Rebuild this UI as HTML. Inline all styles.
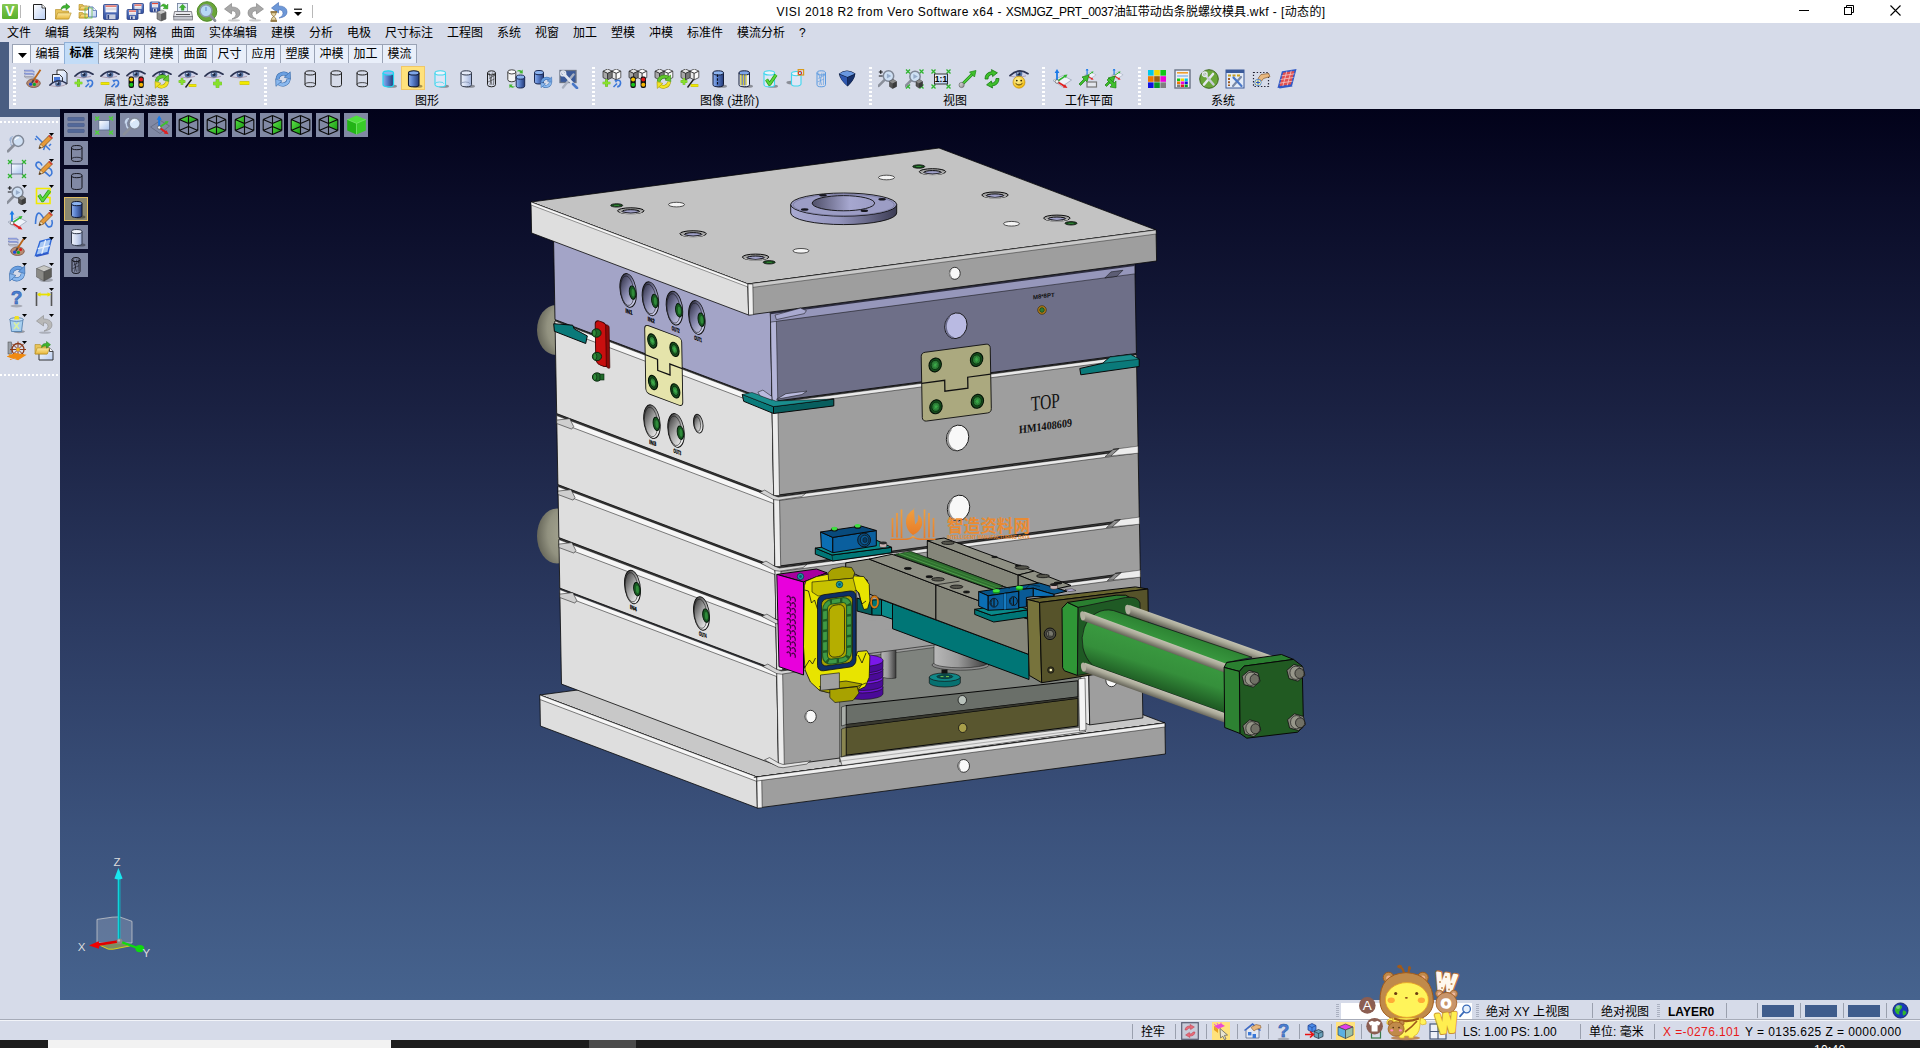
<!DOCTYPE html>
<html lang="zh-CN">
<head>
<meta charset="utf-8">
<title>VISI 2018 R2</title>
<style>
html,body{margin:0;padding:0;}
body{width:1920px;height:1048px;overflow:hidden;position:relative;background:#d6dbe9;
 font-family:"Liberation Sans","Noto Sans CJK SC",sans-serif;font-size:12px;color:#000;}
.abs{position:absolute;}
#titlebar{left:0;top:0;width:1920px;height:23px;background:#fff;}
#title{left:776.5px;top:5px;white-space:nowrap;font-size:12px;line-height:15px;color:#000;}
#menubar{left:0;top:23px;width:1920px;height:19px;background:#d6dbe9;}
.mi{position:absolute;top:3px;line-height:15px;white-space:nowrap;}
#lstrip{left:0;top:42px;width:9px;height:75px;background:#495d81;}
#lstrip2{left:0;top:109px;width:60px;height:8px;background:#495d81;}
#tabs{left:12px;top:44px;height:20px;}
.tab{position:absolute;top:44px;height:19px;background:#e9effa;border:1px solid #9aa3b5;border-bottom:none;box-sizing:border-box;
 text-align:center;line-height:18px;white-space:nowrap;}
.tab.sel{top:42px;height:22px;background:#c2dcf7;border-color:#8fb0d8;font-weight:bold;line-height:20px;}
#toolbar{left:9px;top:64px;width:1911px;height:45px;background:#d6dbe9;}
.grip{position:absolute;width:3px;background-image:repeating-linear-gradient(#fff 0 2px,transparent 2px 4px);}
.tlabel{position:absolute;top:94px;line-height:15px;white-space:nowrap;}
#viewport{left:60px;top:109px;width:1860px;height:891px;
 background:linear-gradient(#02021a 0px,#0a0c28 90px,#1a2142 300px,#2c3b62 520px,#3b527c 720px,#46638e 891px);}
#leftpanel{left:0;top:117px;width:60px;height:883px;background:#d6dbe9;}
#status1{left:0;top:1000px;width:1920px;height:20px;background:#d6dbe9;}
#status2{left:0;top:1020px;width:1920px;height:20px;background:#d6dbe9;}
#taskbar{left:0;top:1040px;width:1920px;height:8px;background:#1d1d1d;}
.st{position:absolute;white-space:nowrap;line-height:15px;font-size:12px;}
.vsep{position:absolute;width:1px;background:#9aa0ae;}
.vb{position:absolute;width:24px;height:24px;background:#8189a4;box-sizing:border-box;}
</style>
</head>
<body>
<svg width="0" height="0" style="position:absolute"><defs>
<linearGradient id="gcb" x1="0" x2="1"><stop offset="0" stop-color="#8fb0ea"/><stop offset="0.35" stop-color="#5f86d2"/><stop offset="1" stop-color="#243a78"/></linearGradient>
<linearGradient id="gcl" x1="0" x2="1"><stop offset="0" stop-color="#eef2fb"/><stop offset="0.5" stop-color="#cdd8f0"/><stop offset="1" stop-color="#9fb0d8"/></linearGradient>
<linearGradient id="gfl" x1="0" y1="0" x2="0" y2="1"><stop offset="0" stop-color="#6d8fd8"/><stop offset="1" stop-color="#2f4b9a"/></linearGradient>
<linearGradient id="gfo" x1="0" y1="0" x2="0" y2="1"><stop offset="0" stop-color="#fbe9a4"/><stop offset="1" stop-color="#e8b73a"/></linearGradient>
<linearGradient id="gpg" x1="0" y1="0" x2="1" y2="1"><stop offset="0" stop-color="#ffffff"/><stop offset="1" stop-color="#b8cdf2"/></linearGradient>
<linearGradient id="ggr" x1="0" y1="0" x2="1" y2="1"><stop offset="0" stop-color="#e4e4e4"/><stop offset="1" stop-color="#8c8c8c"/></linearGradient>
<radialGradient id="gsm" cx="0.4" cy="0.35" r="0.7"><stop offset="0" stop-color="#fff7a0"/><stop offset="1" stop-color="#f0b400"/></radialGradient>
<linearGradient id="gvw" x1="0" y1="0" x2="1" y2="1"><stop offset="0" stop-color="#ffffff"/><stop offset="1" stop-color="#a9c4ee"/></linearGradient>
<linearGradient id="ggn" x1="0" y1="0" x2="1" y2="1"><stop offset="0" stop-color="#5ee04a"/><stop offset="1" stop-color="#169a10"/></linearGradient>
</defs></svg>

<!-- ===== title bar ===== -->
<div id="titlebar" class="abs"></div>
<div id="title" class="abs"><span style="letter-spacing:0.487px">VISI 2018 R2 from Vero Software x64 - </span><span style="letter-spacing:-0.307px">XSMJGZ_PRT_0037</span><span style="letter-spacing:0.04px">油缸带动齿条脱螺纹模具</span><span style="letter-spacing:0.4px">.wkf - [</span><span style="letter-spacing:0.36px">动态的</span>]</div>
<div class="abs" style="left:2px;top:4px;width:16px;height:15px;background:linear-gradient(#86c953,#58b02c);border-radius:1px"></div><div class="abs" style="left:2px;top:3px;width:16px;height:16px;color:#fff;font-weight:bold;font-size:14px;line-height:16px;text-align:center">V</div><div class="vsep" style="left:20px;top:5px;height:13px;background:#b8b8b8"></div><svg class="abs" style="left:29px;top:2px" width="20" height="20" viewBox="0 0 20 20" ><path d="M4.5 2.5h8.5l3.5 3.5v11.5h-12z" fill="url(#gpg)" stroke="#222" stroke-width="1"/><path d="M13.0 2.5v3.5h3.5" fill="#fff" stroke="#222" stroke-width="0.8"/></svg>
<svg class="abs" style="left:54px;top:2px" width="20" height="20" viewBox="0 0 20 20" ><path d="M1.5 7.5h5.6000000000000005l1.2 1.5h6.2v8h-13z" fill="#e8c45a" stroke="#b08a22" stroke-width="0.6"/><path d="M1.5 17l2.2 -6.050000000000001h13.5l-2.4 6.050000000000001z" fill="url(#gfo)" stroke="#b08a22" stroke-width="0.6"/><path d="M7 7.5Q7.5 3.0 12 3.5V1.5L16 4.7L12 8.1V5.9Q9 5.5 7 7.5Z" fill="#3fb52f" stroke="#1f7a16" stroke-width="0.5"/></svg>
<svg class="abs" style="left:78px;top:2px" width="20" height="20" viewBox="0 0 20 20" ><path d="M1 2.5h3.6l1.2 1.5h3.1999999999999993v4h-8z" fill="#e8c45a" stroke="#b08a22" stroke-width="0.6"/><path d="M1 8l2.2 -3.8500000000000005h8.5l-2.4 3.8500000000000005z" fill="url(#gfo)" stroke="#b08a22" stroke-width="0.6"/><path d="M1 10.5h3.6l1.2 1.5h3.1999999999999993v4h-8z" fill="#e8c45a" stroke="#b08a22" stroke-width="0.6"/><path d="M1 16l2.2 -3.8500000000000005h8.5l-2.4 3.8500000000000005z" fill="url(#gfo)" stroke="#b08a22" stroke-width="0.6"/><path d="M10.5 5h4.5l3.5 3.5v6.5h-8z" fill="url(#gpg)" stroke="#5a78b8" stroke-width="1"/><path d="M15.0 5v3.5h3.5" fill="#fff" stroke="#5a78b8" stroke-width="0.8"/><rect x="7" y="6" width="7" height="10" fill="none" stroke="#58b838" stroke-width="0.7"/></svg>
<svg class="abs" style="left:101px;top:2px" width="20" height="20" viewBox="0 0 20 20" ><rect x="2.5" y="2.5" width="15" height="15" rx="1" fill="url(#gfl)" stroke="#2a3f80" stroke-width="0.8"/><rect x="4.5" y="3.1" width="11" height="7.199999999999999" fill="#f4f4f8"/><path d="M4.5 4.1h11" stroke="#e04a3a" stroke-width="1.2"/><path d="M5.0 6.3h10M5.0 7.7h10" stroke="#b8b8c8" stroke-width="0.5"/><rect x="5.5" y="12.4" width="9" height="4.7" fill="#c8cedf"/><rect x="6.5" y="13.0" width="1.6" height="3.9000000000000004" fill="#2a3f80"/></svg>
<svg class="abs" style="left:125px;top:2px" width="20" height="20" viewBox="0 0 20 20" ><rect x="7.5" y="1.5" width="11" height="10" rx="1" fill="url(#gfl)" stroke="#2a3f80" stroke-width="0.8"/><rect x="9.5" y="2.1" width="7" height="4.8" fill="#f4f4f8"/><path d="M9.5 3.1h7" stroke="#e04a3a" stroke-width="1.2"/><path d="M10.0 5.3h6M10.0 6.7h6" stroke="#b8b8c8" stroke-width="0.5"/><rect x="10.5" y="8.100000000000001" width="5" height="3.0000000000000004" fill="#c8cedf"/><rect x="11.5" y="8.5" width="1.6" height="2.6" fill="#2a3f80"/><rect x="2" y="7.5" width="11" height="10" rx="1" fill="url(#gfl)" stroke="#2a3f80" stroke-width="0.8"/><rect x="4" y="8.1" width="7" height="4.8" fill="#f4f4f8"/><path d="M4 9.1h7" stroke="#e04a3a" stroke-width="1.2"/><path d="M4.5 11.3h6M4.5 12.7h6" stroke="#b8b8c8" stroke-width="0.5"/><rect x="5" y="14.100000000000001" width="5" height="3.0000000000000004" fill="#c8cedf"/><rect x="6" y="14.5" width="1.6" height="2.6" fill="#2a3f80"/></svg>
<svg class="abs" style="left:149px;top:0px" width="22" height="22" viewBox="0 0 22 22" ><rect x="1" y="2" width="10" height="10" rx="1" fill="url(#gfl)" stroke="#2a3f80" stroke-width="0.8"/><rect x="3" y="2.6" width="6" height="4.8" fill="#f4f4f8"/><path d="M3 3.6h6" stroke="#e04a3a" stroke-width="1.2"/><path d="M3.5 5.8h5M3.5 7.2h5" stroke="#b8b8c8" stroke-width="0.5"/><rect x="4" y="8.600000000000001" width="4" height="3.0000000000000004" fill="#c8cedf"/><rect x="5" y="9.0" width="1.6" height="2.6" fill="#2a3f80"/><path d="M8 12L12.95 10L17 12V19L12.05 21L8 19Z" fill="#8a8a8a" stroke="#333" stroke-width="0.5"/><path d="M8 12L12.05 14L17 12L12.95 10Z" fill="#c8c8c8"/><path d="M12.05 14V21L17 19V12Z" fill="#5a5a5a"/><path d="M11.5 6.5Q14 2 17.5 5.5L19 4L18.8 9L14 8.6L15.6 7.2Q14 5.4 11.5 6.5Z" fill="#3fb52f" stroke="#1f7a16" stroke-width="0.4"/></svg>
<svg class="abs" style="left:173px;top:2px" width="21" height="20" viewBox="0 0 21 20" ><rect x="4.5" y="1.5" width="10" height="8" fill="#e6f0fb" stroke="#6a7a98" stroke-width="0.8"/><path d="M9.6 2.2L12.8 5.6H10.899999999999999V8.2H8.299999999999999V5.6H6.3999999999999995Z" fill="#3fb52f" stroke="#1f7a16" stroke-width="0.4"/><path d="M1.5 9.5h17l1 5.5h-19z" fill="#e9e9ee" stroke="#6a6a72" stroke-width="0.8"/><rect x="0.8" y="14.5" width="18.6" height="3.5" fill="#c4c6ce" stroke="#6a6a72" stroke-width="0.7"/><path d="M3 12.5h14" stroke="#555" stroke-width="1"/></svg>
<svg class="abs" style="left:196px;top:1px" width="22" height="22" viewBox="0 0 22 22" ><circle cx="11" cy="10.5" r="9.8" fill="#6aa63a"/><circle cx="11" cy="10.5" r="9.8" fill="none" stroke="#4f8a26" stroke-width="1"/><path d="M14.2 14.2L19 19.6" stroke="#8a8f9a" stroke-width="2.8" stroke-linecap="round"/><circle cx="10" cy="9.8" r="6" fill="#b8d8f4" stroke="#8a98a8" stroke-width="1.6"/><path d="M10 6v4" stroke="#5a88c8" stroke-width="1"/></svg>
<svg class="abs" style="left:223px;top:2px" width="20" height="20" viewBox="0 0 20 20" ><g transform="translate(1,0.5)"><path d="M7.5 1L0.5 6.5L7.5 11.5V8.4Q12 8 12 12Q12 15 8 16.5Q16 15.5 16 10.5Q16 4.6 7.5 4.4Z" fill="#a8a8a8" stroke="#7a7a7a" stroke-width="0.6"/></g><ellipse cx="11" cy="18.4" rx="6" ry="1.1" fill="#000" opacity="0.2"/></svg>
<svg class="abs" style="left:246px;top:2px" width="20" height="20" viewBox="0 0 20 20" ><g transform="translate(18,0.5) scale(-1,1)"><path d="M7.5 1L0.5 6.5L7.5 11.5V8.4Q12 8 12 12Q12 15 8 16.5Q16 15.5 16 10.5Q16 4.6 7.5 4.4Z" fill="#a8a8a8" stroke="#7a7a7a" stroke-width="0.6"/></g><ellipse cx="9" cy="18.4" rx="6" ry="1.1" fill="#000" opacity="0.2"/></svg>
<svg class="abs" style="left:268px;top:1px" width="22" height="22" viewBox="0 0 22 22" ><g transform="translate(3,0.5)"><path d="M7.5 1L0.5 6.5L7.5 11.5V8.4Q12 8 12 12Q12 15 8 16.5Q16 15.5 16 10.5Q16 4.6 7.5 4.4Z" fill="#6d98d8" stroke="#3f68b0" stroke-width="0.6"/></g><path d="M2.5 11h6.5M2.5 20h6.5" stroke="#7a5a1a" stroke-width="1.4"/><path d="M3.2 11.8Q3.4 14.6 5.7 15.5Q8 14.6 8.2 11.8ZM3.2 19.2Q3.4 16.4 5.7 15.5Q8 16.4 8.2 19.2Z" fill="#e8d8a8" stroke="#7a5a1a" stroke-width="0.6"/></svg>
<svg class="abs" style="left:293px;top:8px" width="10" height="10" viewBox="0 0 10 10" ><path d="M1 1.2h8" stroke="#000" stroke-width="1.2"/><path d="M1 4h8l-4 4z" fill="#000"/></svg>
<div class="vsep" style="left:312px;top:5px;height:13px;background:#b8b8b8"></div><svg class="abs" style="left:1799px;top:5px" width="10" height="12" viewBox="0 0 10 12" ><path d="M0 5.5h10" stroke="#000" stroke-width="1"/></svg>
<svg class="abs" style="left:1844px;top:5px" width="11" height="11" viewBox="0 0 11 11" ><rect x="0.5" y="2.5" width="7" height="7" fill="#fff" stroke="#000" stroke-width="1"/><path d="M2.5 2.5v-2h7v7h-2" fill="none" stroke="#000" stroke-width="1"/></svg>
<svg class="abs" style="left:1890px;top:5px" width="11" height="11" viewBox="0 0 11 11" ><path d="M0.5 0.5l10 10M10.5 0.5l-10 10" stroke="#000" stroke-width="1.1"/></svg>
<svg class="abs" style="left:1870px;top:29px" width="10" height="10" viewBox="0 0 10 10" ><path d="M0 8.5h9" stroke="#8a8a8a" stroke-width="1"/></svg>
<svg class="abs" style="left:1888px;top:28px" width="10" height="10" viewBox="0 0 10 10" ><rect x="0.5" y="2.5" width="6" height="6" fill="none" stroke="#8a8a8a" stroke-width="1"/><path d="M2.5 2.5v-2h6v6h-2" fill="none" stroke="#8a8a8a" stroke-width="1"/></svg>
<svg class="abs" style="left:1906px;top:28px" width="10" height="10" viewBox="0 0 10 10" ><path d="M0.5 0.5l9 9M9.5 0.5l-9 9" stroke="#8a8a8a" stroke-width="1"/></svg>

<!-- ===== menu bar ===== -->
<div id="menubar" class="abs">
<span class="mi" style="left:7px">文件</span><span class="mi" style="left:45px">编辑</span><span class="mi" style="left:83px">线架构</span><span class="mi" style="left:133px">网格</span><span class="mi" style="left:171px">曲面</span><span class="mi" style="left:209px">实体编辑</span><span class="mi" style="left:271px">建模</span><span class="mi" style="left:309px">分析</span><span class="mi" style="left:347px">电极</span><span class="mi" style="left:385px">尺寸标注</span><span class="mi" style="left:447px">工程图</span><span class="mi" style="left:497px">系统</span><span class="mi" style="left:535px">视窗</span><span class="mi" style="left:573px">加工</span><span class="mi" style="left:611px">塑模</span><span class="mi" style="left:649px">冲模</span><span class="mi" style="left:687px">标准件</span><span class="mi" style="left:737px">模流分析</span><span class="mi" style="left:799px">?</span>
</div>
<div id="lstrip" class="abs"></div>
<!-- ===== tabs ===== -->
<div class="tab" style="left:12px;width:19px;background:#fff"><svg width="9" height="5" style="position:absolute;left:5px;top:8px"><path d="M0 0H9L4.5 5Z" fill="#000"/></svg></div>
<div class="tab" style="left:30px;width:35px">编辑</div>
<div class="tab sel" style="left:64px;width:35px">标准</div>
<div class="tab" style="left:98px;width:47px">线架构</div>
<div class="tab" style="left:144px;width:35px">建模</div>
<div class="tab" style="left:178px;width:35px">曲面</div>
<div class="tab" style="left:212px;width:35px">尺寸</div>
<div class="tab" style="left:246px;width:35px">应用</div>
<div class="tab" style="left:280px;width:35px">塑膜</div>
<div class="tab" style="left:314px;width:35px">冲模</div>
<div class="tab" style="left:348px;width:35px">加工</div>
<div class="tab" style="left:382px;width:35px">模流</div>
<!-- ===== toolbar ===== -->
<div id="toolbar" class="abs"></div>
<div class="grip" style="left:13px;top:67px;height:40px"></div>
<div class="grip" style="left:264px;top:67px;height:40px"></div>
<div class="grip" style="left:592px;top:67px;height:40px"></div>
<div class="grip" style="left:869px;top:67px;height:40px"></div>
<div class="grip" style="left:1042px;top:67px;height:40px"></div>
<div class="grip" style="left:1138px;top:67px;height:40px"></div>
<div class="tlabel" style="left:104px;letter-spacing:0.35px">属性/过滤器</div>
<div class="tlabel" style="left:415px">图形</div>
<div class="tlabel" style="left:700px">图像 (进阶)</div>
<div class="tlabel" style="left:943px">视图</div>
<div class="tlabel" style="left:1065px">工作平面</div>
<div class="tlabel" style="left:1211px">系统</div>
<svg class="abs" style="left:23px;top:69px" width="20" height="20" viewBox="0 0 20 20" ><path d="M1 1.2h8.5l2 1.6h-8.5z" fill="#8fa4ee" stroke="#5060a8" stroke-width="0.4"/><path d="M1 2.6h8.5l2 1.6h-8.5z" fill="#eef0f8" stroke="#8088a8" stroke-width="0.4"/><path d="M1 4.2h8.5l2 1.6h-8.5z" fill="#8fa4ee" stroke="#5060a8" stroke-width="0.4"/><path d="M1 5.8h8.5l2 1.6h-8.5z" fill="#eef0f8" stroke="#8088a8" stroke-width="0.4"/><path d="M1 7.4h8.5l2 1.6h-8.5z" fill="#c8c8d0" stroke="#707080" stroke-width="0.4"/><ellipse cx="10.5" cy="14.2" rx="6.8" ry="4.3" fill="#b98a72" stroke="#6a4632" stroke-width="0.7"/><circle cx="7.6" cy="15.2" r="1.6" fill="#1a4ad8"/><circle cx="11.4" cy="15.4" r="1.6" fill="#12a82a"/><circle cx="13.6" cy="12.6" r="1.5" fill="#d81a1a"/><path d="M17.5 0.8L10 12" stroke="#b8641a" stroke-width="1.8"/><path d="M10.6 11L8.8 14" stroke="#444" stroke-width="1.6"/></svg>
<svg class="abs" style="left:49px;top:69px" width="20" height="20" viewBox="0 0 20 20" ><path d="M8 1h7l3 3v11h-10z" fill="url(#gpg)" stroke="#222" stroke-width="0.9"/><path d="M3.5 5.5h7l3 3v8h-10z" fill="url(#gpg)" stroke="#222" stroke-width="0.9"/><rect x="5" y="8" width="6" height="5" fill="#4a78d8"/><g transform="translate(0,9.5) scale(0.92)"><path d="M1 7.2Q9.5 -0.5 19 5.2Q16 9.2 9.5 9.2Q4 9.2 1 7.2Z" fill="#cfd3ea"/><circle cx="10" cy="5.6" r="3.3" fill="#56719f"/><circle cx="10" cy="5.6" r="1.5" fill="#1c2642"/><circle cx="8.9" cy="4.5" r="0.8" fill="#e8eefc"/><path d="M1 7.2Q9.5 -1.2 19 5.2" fill="none" stroke="#2c3452" stroke-width="1.7" stroke-linecap="round"/><path d="M1.5 7.8Q9 10.2 17 7.4" fill="none" stroke="#a08a98" stroke-width="0.7"/></g></svg>
<svg class="abs" style="left:74px;top:69px" width="20" height="20" viewBox="0 0 20 20" ><g transform="translate(0,0) scale(1.0)"><path d="M1 7.2Q9.5 -0.5 19 5.2Q16 9.2 9.5 9.2Q4 9.2 1 7.2Z" fill="#cfd3ea"/><circle cx="10" cy="5.6" r="3.3" fill="#56719f"/><circle cx="10" cy="5.6" r="1.5" fill="#1c2642"/><circle cx="8.9" cy="4.5" r="0.8" fill="#e8eefc"/><path d="M1 7.2Q9.5 -1.2 19 5.2" fill="none" stroke="#2c3452" stroke-width="1.7" stroke-linecap="round"/><path d="M1.5 7.8Q9 10.2 17 7.4" fill="none" stroke="#a08a98" stroke-width="0.7"/></g><path d="M0.75 14H8.25M4.5 10.25V17.75" stroke="#5aa512" stroke-width="2.5999999999999996" /><path d="M0.75 14H8.25M4.5 10.25V17.75" stroke="#86e02c" stroke-width="1.9"/><g transform="translate(11,10.5)"><path d="M0.5 7.5L4 4" stroke="#3c78d8" stroke-width="1.6" fill="none"/><path d="M3 1.2Q7.5 -0.2 7.6 3.4Q7.4 6.8 4.2 7.4" stroke="#3c78d8" stroke-width="1.6" fill="none"/><path d="M1.2 0.2L4.6 0.6L3 3.4Z" fill="#3c78d8"/></g></svg>
<svg class="abs" style="left:100px;top:69px" width="20" height="20" viewBox="0 0 20 20" ><g transform="translate(0,0) scale(1.0)"><path d="M1 7.2Q9.5 -0.5 19 5.2Q16 9.2 9.5 9.2Q4 9.2 1 7.2Z" fill="#cfd3ea"/><circle cx="10" cy="5.6" r="3.3" fill="#56719f"/><circle cx="10" cy="5.6" r="1.5" fill="#1c2642"/><circle cx="8.9" cy="4.5" r="0.8" fill="#e8eefc"/><path d="M1 7.2Q9.5 -1.2 19 5.2" fill="none" stroke="#2c3452" stroke-width="1.7" stroke-linecap="round"/><path d="M1.5 7.8Q9 10.2 17 7.4" fill="none" stroke="#a08a98" stroke-width="0.7"/></g><path d="M0.75 14.5H9.25" stroke="#b8b000" stroke-width="2.7"/><path d="M0.75 14.5H9.25" stroke="#f2ea00" stroke-width="1.9"/><g transform="translate(11,10.5)"><path d="M0.5 7.5L4 4" stroke="#3c78d8" stroke-width="1.6" fill="none"/><path d="M3 1.2Q7.5 -0.2 7.6 3.4Q7.4 6.8 4.2 7.4" stroke="#3c78d8" stroke-width="1.6" fill="none"/><path d="M1.2 0.2L4.6 0.6L3 3.4Z" fill="#3c78d8"/></g></svg>
<svg class="abs" style="left:126px;top:69px" width="20" height="20" viewBox="0 0 20 20" ><g transform="translate(0,-0.5) scale(1.0)"><path d="M1 7.2Q9.5 -0.5 19 5.2Q16 9.2 9.5 9.2Q4 9.2 1 7.2Z" fill="#cfd3ea"/><circle cx="10" cy="5.6" r="3.3" fill="#56719f"/><circle cx="10" cy="5.6" r="1.5" fill="#1c2642"/><circle cx="8.9" cy="4.5" r="0.8" fill="#e8eefc"/><path d="M1 7.2Q9.5 -1.2 19 5.2" fill="none" stroke="#2c3452" stroke-width="1.7" stroke-linecap="round"/><path d="M1.5 7.8Q9 10.2 17 7.4" fill="none" stroke="#a08a98" stroke-width="0.7"/></g><rect x="2.6" y="7.5" width="5.4" height="11.5" rx="2" fill="#111"/><circle cx="5.300000000000001" cy="10.6" r="2" fill="#f5c400"/><circle cx="5.300000000000001" cy="15.8" r="2" fill="#18c418"/><rect x="12.4" y="7.5" width="5.4" height="11.5" rx="2" fill="#111"/><circle cx="15.100000000000001" cy="10.6" r="2" fill="#e01818"/><circle cx="15.100000000000001" cy="15.8" r="2" fill="#f5b400"/></svg>
<svg class="abs" style="left:152px;top:69px" width="20" height="20" viewBox="0 0 20 20" ><g transform="translate(0,0) scale(1.0)"><path d="M1 7.2Q9.5 -0.5 19 5.2Q16 9.2 9.5 9.2Q4 9.2 1 7.2Z" fill="#cfd3ea"/><circle cx="10" cy="5.6" r="3.3" fill="#56719f"/><circle cx="10" cy="5.6" r="1.5" fill="#1c2642"/><circle cx="8.9" cy="4.5" r="0.8" fill="#e8eefc"/><path d="M1 7.2Q9.5 -1.2 19 5.2" fill="none" stroke="#2c3452" stroke-width="1.7" stroke-linecap="round"/><path d="M1.5 7.8Q9 10.2 17 7.4" fill="none" stroke="#a08a98" stroke-width="0.7"/></g><g transform="translate(2.6,5.2) scale(1.0)"><path d="M2.2 7.2A5.6 5.2 0 0 1 11.6 3.6" fill="none" stroke="#3b8c14" stroke-width="3.6"/><path d="M2.2 7.2A5.6 5.2 0 0 1 11.6 3.6" fill="none" stroke="#62c82c" stroke-width="2.6"/><path d="M13.9 0.6L14.2 7.4L8.4 5.6Z" fill="#62c82c" stroke="#3b8c14" stroke-width="0.6"/><path d="M12.4 7.4A5.6 5.2 0 0 1 3 11" fill="none" stroke="#a89a00" stroke-width="3.6"/><path d="M12.4 7.4A5.6 5.2 0 0 1 3 11" fill="none" stroke="#f2e424" stroke-width="2.6"/><path d="M0.7 14L0.4 7.2L6.2 9Z" fill="#f2e424" stroke="#a89a00" stroke-width="0.6"/></g></svg>
<svg class="abs" style="left:178px;top:69px" width="20" height="20" viewBox="0 0 20 20" ><g transform="translate(0,0) scale(1.0)"><path d="M1 7.2Q9.5 -0.5 19 5.2Q16 9.2 9.5 9.2Q4 9.2 1 7.2Z" fill="#cfd3ea"/><circle cx="10" cy="5.6" r="3.3" fill="#56719f"/><circle cx="10" cy="5.6" r="1.5" fill="#1c2642"/><circle cx="8.9" cy="4.5" r="0.8" fill="#e8eefc"/><path d="M1 7.2Q9.5 -1.2 19 5.2" fill="none" stroke="#2c3452" stroke-width="1.7" stroke-linecap="round"/><path d="M1.5 7.8Q9 10.2 17 7.4" fill="none" stroke="#a08a98" stroke-width="0.7"/></g><path d="M0.75 12.5H7.25M4 9.25V15.75" stroke="#5aa512" stroke-width="2.5999999999999996" /><path d="M0.75 12.5H7.25M4 9.25V15.75" stroke="#86e02c" stroke-width="1.9"/><path d="M7.5 18.5L13.5 10.5" stroke="#222" stroke-width="1.4"/><path d="M10.75 16.5H18.25" stroke="#b8b000" stroke-width="2.7"/><path d="M10.75 16.5H18.25" stroke="#f2ea00" stroke-width="1.9"/></svg>
<svg class="abs" style="left:204px;top:69px" width="20" height="20" viewBox="0 0 20 20" ><g transform="translate(0,0) scale(1.0)"><path d="M1 7.2Q9.5 -0.5 19 5.2Q16 9.2 9.5 9.2Q4 9.2 1 7.2Z" fill="#cfd3ea"/><circle cx="10" cy="5.6" r="3.3" fill="#56719f"/><circle cx="10" cy="5.6" r="1.5" fill="#1c2642"/><circle cx="8.9" cy="4.5" r="0.8" fill="#e8eefc"/><path d="M1 7.2Q9.5 -1.2 19 5.2" fill="none" stroke="#2c3452" stroke-width="1.7" stroke-linecap="round"/><path d="M1.5 7.8Q9 10.2 17 7.4" fill="none" stroke="#a08a98" stroke-width="0.7"/></g><path d="M9.25 14.5H17.75M13.5 10.25V18.75" stroke="#5aa512" stroke-width="3.5" /><path d="M9.25 14.5H17.75M13.5 10.25V18.75" stroke="#86e02c" stroke-width="2.8"/></svg>
<svg class="abs" style="left:230px;top:69px" width="20" height="20" viewBox="0 0 20 20" ><g transform="translate(0,0) scale(1.0)"><path d="M1 7.2Q9.5 -0.5 19 5.2Q16 9.2 9.5 9.2Q4 9.2 1 7.2Z" fill="#cfd3ea"/><circle cx="10" cy="5.6" r="3.3" fill="#56719f"/><circle cx="10" cy="5.6" r="1.5" fill="#1c2642"/><circle cx="8.9" cy="4.5" r="0.8" fill="#e8eefc"/><path d="M1 7.2Q9.5 -1.2 19 5.2" fill="none" stroke="#2c3452" stroke-width="1.7" stroke-linecap="round"/><path d="M1.5 7.8Q9 10.2 17 7.4" fill="none" stroke="#a08a98" stroke-width="0.7"/></g><path d="M9.75 14H19.25" stroke="#b8b000" stroke-width="3.5999999999999996"/><path d="M9.75 14H19.25" stroke="#f2ea00" stroke-width="2.8"/></svg>
<svg class="abs" style="left:273px;top:69px" width="20" height="20" viewBox="0 0 20 20" ><g transform="translate(2.2,2.2) scale(1.08)"><path d="M2.2 7.2A5.6 5.2 0 0 1 11.6 3.6" fill="none" stroke="#3568a8" stroke-width="3.6"/><path d="M2.2 7.2A5.6 5.2 0 0 1 11.6 3.6" fill="none" stroke="#6a9fe0" stroke-width="2.6"/><path d="M13.9 0.6L14.2 7.4L8.4 5.6Z" fill="#6a9fe0" stroke="#3568a8" stroke-width="0.6"/><path d="M12.4 7.4A5.6 5.2 0 0 1 3 11" fill="none" stroke="#3568a8" stroke-width="3.6"/><path d="M12.4 7.4A5.6 5.2 0 0 1 3 11" fill="none" stroke="#8ab8ee" stroke-width="2.6"/><path d="M0.7 14L0.4 7.2L6.2 9Z" fill="#8ab8ee" stroke="#3568a8" stroke-width="0.6"/></g></svg>
<svg class="abs" style="left:300px;top:69px" width="20" height="20" viewBox="0 0 20 20" ><path d="M5 3.9000000000000004V15.700000000000001A5.25 2.1 0 0 0 15.5 15.700000000000001V3.9000000000000004" fill="none" stroke="#222" stroke-width="1.0"/><ellipse cx="10.25" cy="3.9000000000000004" rx="5.25" ry="2.1" fill="none" stroke="#222" stroke-width="1.0"/><path d="M5 15.700000000000001A5.25 2.1 0 0 1 15.5 15.700000000000001" fill="none" stroke="#222" stroke-width="0.8"/></svg>
<svg class="abs" style="left:326px;top:69px" width="20" height="20" viewBox="0 0 20 20" ><path d="M5 3.9000000000000004V15.700000000000001A5.25 2.1 0 0 0 15.5 15.700000000000001V3.9000000000000004" fill="none" stroke="#222" stroke-width="1.0"/><ellipse cx="10.25" cy="3.9000000000000004" rx="5.25" ry="2.1" fill="none" stroke="#222" stroke-width="1.0"/></svg>
<svg class="abs" style="left:352px;top:69px" width="20" height="20" viewBox="0 0 20 20" ><path d="M5 3.9000000000000004V15.700000000000001A5.25 2.1 0 0 0 15.5 15.700000000000001V3.9000000000000004" fill="none" stroke="#222" stroke-width="1.0"/><ellipse cx="10.25" cy="3.9000000000000004" rx="5.25" ry="2.1" fill="none" stroke="#222" stroke-width="1.0"/><path d="M5 15.700000000000001A5.25 2.1 0 0 1 15.5 15.700000000000001" fill="none" stroke="#222" stroke-width="0.8"/></svg>
<svg class="abs" style="left:378px;top:69px" width="20" height="20" viewBox="0 0 20 20" ><ellipse cx="13.75" cy="17.2" rx="5.25" ry="1.6" fill="#000" opacity="0.35"/><path d="M5 3.9000000000000004V15.700000000000001A5.25 2.1 0 0 0 15.5 15.700000000000001V3.9000000000000004" fill="url(#gcb)" stroke="#20d8f0" stroke-width="1.2"/><ellipse cx="10.25" cy="3.9000000000000004" rx="5.25" ry="2.1" fill="#8db4f0" stroke="#20d8f0" stroke-width="1.2"/></svg>
<div class="abs" style="left:401px;top:66px;width:24px;height:24px;box-sizing:border-box;background:#ffe27c;border:1px solid #f0c768"></div><svg class="abs" style="left:403px;top:69px" width="20" height="20" viewBox="0 0 20 20" ><ellipse cx="14.25" cy="17.2" rx="5.25" ry="1.6" fill="#000" opacity="0.35"/><path d="M5.5 3.9000000000000004V15.700000000000001A5.25 2.1 0 0 0 16.0 15.700000000000001V3.9000000000000004" fill="url(#gcb)" stroke="#101830" stroke-width="1.1"/><ellipse cx="10.75" cy="3.9000000000000004" rx="5.25" ry="2.1" fill="#7fa6e8" stroke="#101830" stroke-width="1.1"/></svg>
<svg class="abs" style="left:430px;top:69px" width="20" height="20" viewBox="0 0 20 20" ><ellipse cx="13.75" cy="17.2" rx="5.25" ry="1.6" fill="#000" opacity="0.35"/><path d="M5 3.9000000000000004V15.700000000000001A5.25 2.1 0 0 0 15.5 15.700000000000001V3.9000000000000004" fill="#dfe6f6" stroke="#3fd8ee" stroke-width="1.1"/><ellipse cx="10.25" cy="3.9000000000000004" rx="5.25" ry="2.1" fill="#eef2fb" stroke="#3fd8ee" stroke-width="1.1"/><path d="M5 14.9A4.5 1.9 0 0 1 14 14.9" fill="none" stroke="#3fd8ee" stroke-width="0.8"/></svg>
<svg class="abs" style="left:456px;top:69px" width="20" height="20" viewBox="0 0 20 20" ><ellipse cx="13.75" cy="17.2" rx="5.25" ry="1.6" fill="#000" opacity="0.35"/><path d="M5 3.9000000000000004V15.700000000000001A5.25 2.1 0 0 0 15.5 15.700000000000001V3.9000000000000004" fill="url(#gcl)" stroke="#30384a" stroke-width="1.0"/><ellipse cx="10.25" cy="3.9000000000000004" rx="5.25" ry="2.1" fill="#e4eaf8" stroke="#30384a" stroke-width="1.0"/><path d="M5 14.9A4.5 1.9 0 0 1 14 14.9" fill="none" stroke="#7a88a8" stroke-width="0.7"/></svg>
<svg class="abs" style="left:482px;top:69px" width="20" height="20" viewBox="0 0 20 20" ><path d="M5.5 3.9000000000000004V15.700000000000001A4.0 2.1 0 0 0 13.5 15.700000000000001V3.9000000000000004" fill="none" stroke="#222" stroke-width="1.0"/><ellipse cx="9.5" cy="3.9000000000000004" rx="4.0" ry="2.1" fill="none" stroke="#222" stroke-width="1.0"/><path d="M7 3.6L10 16M10.4 3.6L8 16M12 3.8L11.6 16M7 9.5L13.3 6M6 13L12.4 10" stroke="#333" stroke-width="0.6" fill="none"/></svg>
<svg class="abs" style="left:507px;top:69px" width="20" height="20" viewBox="0 0 20 20" ><path d="M0.8 2.9000000000000004V10.700000000000001A4.0 2.1 0 0 0 8.8 10.700000000000001V2.9000000000000004" fill="#f4f4f4" stroke="#444" stroke-width="1.0"/><ellipse cx="4.8" cy="2.9000000000000004" rx="4.0" ry="2.1" fill="#fff" stroke="#444" stroke-width="1.0"/><path d="M9.5 2.5Q12 0 14.5 1.8L15.6 0.6L15.8 4.4L12.2 4.2L13.4 3Q12 2 9.5 2.5Z" fill="#3fb52f"/><path d="M8.5 17.2Q6 19.6 3.6 18L2.6 19.2L2.2 15.4L5.8 15.6L4.6 16.8Q6 17.8 8.5 17.2Z" fill="#3fb52f"/><path d="M9.2 8.1V16.9A4.25 2.1 0 0 0 17.7 16.9V8.1" fill="url(#gcb)" stroke="#1a2850" stroke-width="1.0"/><ellipse cx="13.45" cy="8.1" rx="4.25" ry="2.1" fill="#8db4f0" stroke="#1a2850" stroke-width="1.0"/></svg>
<svg class="abs" style="left:533px;top:69px" width="20" height="20" viewBox="0 0 20 20" ><path d="M1.5 3.6V12.9A4.5 2.1 0 0 0 10.5 12.9V3.6" fill="url(#gcb)" stroke="#1a2850" stroke-width="1.0"/><ellipse cx="6.0" cy="3.6" rx="4.5" ry="2.1" fill="#8db4f0" stroke="#1a2850" stroke-width="1.0"/><g transform="translate(7.5,7.5) scale(0.8)"><path d="M2.2 7.2A5.6 5.2 0 0 1 11.6 3.6" fill="none" stroke="#3568a8" stroke-width="3.6"/><path d="M2.2 7.2A5.6 5.2 0 0 1 11.6 3.6" fill="none" stroke="#6a9fe0" stroke-width="2.6"/><path d="M13.9 0.6L14.2 7.4L8.4 5.6Z" fill="#6a9fe0" stroke="#3568a8" stroke-width="0.6"/><path d="M12.4 7.4A5.6 5.2 0 0 1 3 11" fill="none" stroke="#3568a8" stroke-width="3.6"/><path d="M12.4 7.4A5.6 5.2 0 0 1 3 11" fill="none" stroke="#8ab8ee" stroke-width="2.6"/><path d="M0.7 14L0.4 7.2L6.2 9Z" fill="#8ab8ee" stroke="#3568a8" stroke-width="0.6"/></g></svg>
<svg class="abs" style="left:559px;top:69px" width="20" height="20" viewBox="0 0 20 20" ><rect x="1" y="1.5" width="16" height="12" fill="#3a5a9a" stroke="#6a7384" stroke-width="1.3"/><path d="M4 18.5L14.5 5.5" stroke="#a8b0c0" stroke-width="2.4" stroke-linecap="round"/><path d="M4 4L15.5 16.5" stroke="#dfe4ee" stroke-width="2.6" stroke-linecap="round"/><path d="M14 15L18 19" stroke="#4a78c8" stroke-width="2.6" stroke-linecap="round"/><circle cx="4.2" cy="4.4" r="2.4" fill="none" stroke="#dfe4ee" stroke-width="1.6"/></svg>
<svg class="abs" style="left:602px;top:69px" width="20" height="20" viewBox="0 0 20 20" ><path d="M9.6 2.2L14.2 0L18.799999999999997 2.2L14.2 4.4Z" fill="#ffffff" stroke="#222" stroke-width="0.7" stroke-linejoin="round"/><path d="M9.6 2.2V8.6L14.2 10.8V4.4Z" fill="#e8e8e8" stroke="#222" stroke-width="0.7" stroke-linejoin="round"/><path d="M18.799999999999997 2.2V8.6L14.2 10.8V4.4Z" fill="#fafafa" stroke="#222" stroke-width="0.7" stroke-linejoin="round"/><path d="M1 2.2L5.6 0L10.2 2.2L5.6 4.4Z" fill="#e4e4e4" stroke="#222" stroke-width="0.7" stroke-linejoin="round"/><path d="M1 2.2V8.6L5.6 10.8V4.4Z" fill="#a8a8a8" stroke="#222" stroke-width="0.7" stroke-linejoin="round"/><path d="M10.2 2.2V8.6L5.6 10.8V4.4Z" fill="#787878" stroke="#222" stroke-width="0.7" stroke-linejoin="round"/><path d="M0.75 14H8.25M4.5 10.25V17.75" stroke="#5aa512" stroke-width="2.5999999999999996" /><path d="M0.75 14H8.25M4.5 10.25V17.75" stroke="#86e02c" stroke-width="1.9"/><g transform="translate(11,10.5)"><path d="M0.5 7.5L4 4" stroke="#3c78d8" stroke-width="1.6" fill="none"/><path d="M3 1.2Q7.5 -0.2 7.6 3.4Q7.4 6.8 4.2 7.4" stroke="#3c78d8" stroke-width="1.6" fill="none"/><path d="M1.2 0.2L4.6 0.6L3 3.4Z" fill="#3c78d8"/></g></svg>
<svg class="abs" style="left:628px;top:69px" width="20" height="20" viewBox="0 0 20 20" ><path d="M9.6 2.2L14.2 0L18.799999999999997 2.2L14.2 4.4Z" fill="#ffffff" stroke="#222" stroke-width="0.7" stroke-linejoin="round"/><path d="M9.6 2.2V8.6L14.2 10.8V4.4Z" fill="#e8e8e8" stroke="#222" stroke-width="0.7" stroke-linejoin="round"/><path d="M18.799999999999997 2.2V8.6L14.2 10.8V4.4Z" fill="#fafafa" stroke="#222" stroke-width="0.7" stroke-linejoin="round"/><path d="M1 2.2L5.6 0L10.2 2.2L5.6 4.4Z" fill="#e4e4e4" stroke="#222" stroke-width="0.7" stroke-linejoin="round"/><path d="M1 2.2V8.6L5.6 10.8V4.4Z" fill="#a8a8a8" stroke="#222" stroke-width="0.7" stroke-linejoin="round"/><path d="M10.2 2.2V8.6L5.6 10.8V4.4Z" fill="#787878" stroke="#222" stroke-width="0.7" stroke-linejoin="round"/><rect x="2.4" y="7.5" width="5.4" height="11.5" rx="2" fill="#111"/><circle cx="5.1" cy="10.6" r="2" fill="#f5c400"/><circle cx="5.1" cy="15.8" r="2" fill="#18c418"/><rect x="12.6" y="7.5" width="5.4" height="11.5" rx="2" fill="#111"/><circle cx="15.3" cy="10.6" r="2" fill="#e01818"/><circle cx="15.3" cy="15.8" r="2" fill="#f5b400"/></svg>
<svg class="abs" style="left:654px;top:69px" width="20" height="20" viewBox="0 0 20 20" ><path d="M9.6 2.2L14.2 0L18.799999999999997 2.2L14.2 4.4Z" fill="#ffffff" stroke="#222" stroke-width="0.7" stroke-linejoin="round"/><path d="M9.6 2.2V8.6L14.2 10.8V4.4Z" fill="#e8e8e8" stroke="#222" stroke-width="0.7" stroke-linejoin="round"/><path d="M18.799999999999997 2.2V8.6L14.2 10.8V4.4Z" fill="#fafafa" stroke="#222" stroke-width="0.7" stroke-linejoin="round"/><path d="M1 2.2L5.6 0L10.2 2.2L5.6 4.4Z" fill="#e4e4e4" stroke="#222" stroke-width="0.7" stroke-linejoin="round"/><path d="M1 2.2V8.6L5.6 10.8V4.4Z" fill="#a8a8a8" stroke="#222" stroke-width="0.7" stroke-linejoin="round"/><path d="M10.2 2.2V8.6L5.6 10.8V4.4Z" fill="#787878" stroke="#222" stroke-width="0.7" stroke-linejoin="round"/><g transform="translate(2.6,5.4) scale(1.0)"><path d="M2.2 7.2A5.6 5.2 0 0 1 11.6 3.6" fill="none" stroke="#3b8c14" stroke-width="3.6"/><path d="M2.2 7.2A5.6 5.2 0 0 1 11.6 3.6" fill="none" stroke="#62c82c" stroke-width="2.6"/><path d="M13.9 0.6L14.2 7.4L8.4 5.6Z" fill="#62c82c" stroke="#3b8c14" stroke-width="0.6"/><path d="M12.4 7.4A5.6 5.2 0 0 1 3 11" fill="none" stroke="#a89a00" stroke-width="3.6"/><path d="M12.4 7.4A5.6 5.2 0 0 1 3 11" fill="none" stroke="#f2e424" stroke-width="2.6"/><path d="M0.7 14L0.4 7.2L6.2 9Z" fill="#f2e424" stroke="#a89a00" stroke-width="0.6"/></g></svg>
<svg class="abs" style="left:680px;top:69px" width="20" height="20" viewBox="0 0 20 20" ><path d="M9.6 2.2L14.2 0L18.799999999999997 2.2L14.2 4.4Z" fill="#ffffff" stroke="#222" stroke-width="0.7" stroke-linejoin="round"/><path d="M9.6 2.2V8.6L14.2 10.8V4.4Z" fill="#e8e8e8" stroke="#222" stroke-width="0.7" stroke-linejoin="round"/><path d="M18.799999999999997 2.2V8.6L14.2 10.8V4.4Z" fill="#fafafa" stroke="#222" stroke-width="0.7" stroke-linejoin="round"/><path d="M1 2.2L5.6 0L10.2 2.2L5.6 4.4Z" fill="#e4e4e4" stroke="#222" stroke-width="0.7" stroke-linejoin="round"/><path d="M1 2.2V8.6L5.6 10.8V4.4Z" fill="#a8a8a8" stroke="#222" stroke-width="0.7" stroke-linejoin="round"/><path d="M10.2 2.2V8.6L5.6 10.8V4.4Z" fill="#787878" stroke="#222" stroke-width="0.7" stroke-linejoin="round"/><path d="M0.75 12.5H7.25M4 9.25V15.75" stroke="#5aa512" stroke-width="2.5999999999999996" /><path d="M0.75 12.5H7.25M4 9.25V15.75" stroke="#86e02c" stroke-width="1.9"/><path d="M7.5 18.5L13.5 10.5" stroke="#222" stroke-width="1.4"/><path d="M10.75 16.5H18.25" stroke="#b8b000" stroke-width="2.7"/><path d="M10.75 16.5H18.25" stroke="#f2ea00" stroke-width="1.9"/></svg>
<svg class="abs" style="left:708px;top:69px" width="20" height="20" viewBox="0 0 20 20" ><ellipse cx="13.75" cy="17.2" rx="5.25" ry="1.6" fill="#000" opacity="0.35"/><path d="M5 3.9000000000000004V15.700000000000001A5.25 2.1 0 0 0 15.5 15.700000000000001V3.9000000000000004" fill="url(#gcb)" stroke="#141c38" stroke-width="1.0"/><ellipse cx="10.25" cy="3.9000000000000004" rx="5.25" ry="2.1" fill="#8db4f0" stroke="#141c38" stroke-width="1.0"/><path d="M9.5 5.5v10.5" stroke="#0a1020" stroke-width="1.2" stroke-dasharray="2.4 1.4"/></svg>
<svg class="abs" style="left:734px;top:69px" width="20" height="20" viewBox="0 0 20 20" ><ellipse cx="13.75" cy="17.2" rx="5.25" ry="1.6" fill="#000" opacity="0.35"/><path d="M5 3.9000000000000004V15.700000000000001A5.25 2.1 0 0 0 15.5 15.700000000000001V3.9000000000000004" fill="#e8ecf6" stroke="#141c38" stroke-width="1.0"/><ellipse cx="10.25" cy="3.9000000000000004" rx="5.25" ry="2.1" fill="#7fa6e8" stroke="#141c38" stroke-width="1.0"/><path d="M7 5.6v10.6M9.5 5.8v10.6M12 5.6v10.6" stroke="#d8cc30" stroke-width="1.3"/><path d="M8.2 5.8v10.6M10.8 5.8v10.6" stroke="#4a64b0" stroke-width="1"/></svg>
<svg class="abs" style="left:760px;top:69px" width="20" height="20" viewBox="0 0 20 20" ><ellipse cx="12.75" cy="17.2" rx="5.25" ry="1.6" fill="#000" opacity="0.35"/><path d="M4 3.9000000000000004V15.700000000000001A5.25 2.1 0 0 0 14.5 15.700000000000001V3.9000000000000004" fill="#dfe6f6" stroke="#3fd8ee" stroke-width="1.1"/><ellipse cx="9.25" cy="3.9000000000000004" rx="5.25" ry="2.1" fill="#eef2fb" stroke="#3fd8ee" stroke-width="1.1"/><path d="M6.5 10.5L9.6 15.2L16 5.8" fill="none" stroke="#2a9a1a" stroke-width="3.4" stroke-linejoin="round"/><path d="M6.5 10.5L9.6 15.2L16 5.8" fill="none" stroke="#5ad83a" stroke-width="2" stroke-linejoin="round"/></svg>
<svg class="abs" style="left:786px;top:69px" width="20" height="20" viewBox="0 0 20 20" ><ellipse cx="5" cy="13.6" rx="4.6" ry="1.8" fill="#000" opacity="0.35"/><path d="M5.5 4.6V14.9A4.75 2.1 0 0 0 15.0 14.9V4.6" fill="#dfe6f6" stroke="#3fd8ee" stroke-width="1.1"/><ellipse cx="10.25" cy="4.6" rx="4.75" ry="2.1" fill="#eef2fb" stroke="#3fd8ee" stroke-width="1.1"/><rect x="12.2" y="0.6" width="5.4" height="5.4" fill="none" stroke="#d89a1a" stroke-width="1.2"/><circle cx="14" cy="4" r="1.7" fill="none" stroke="#e03030" stroke-width="1"/></svg>
<svg class="abs" style="left:812px;top:69px" width="20" height="20" viewBox="0 0 20 20" ><path d="M5 3.9000000000000004V15.700000000000001A4.25 2.1 0 0 0 13.5 15.700000000000001V3.9000000000000004" fill="none" stroke="#5a9ae0" stroke-width="1.0"/><ellipse cx="9.25" cy="3.9000000000000004" rx="4.25" ry="2.1" fill="none" stroke="#5a9ae0" stroke-width="1.0"/><path d="M6.5 3.6L9.6 16M10 3.6L7.6 16M11.8 3.8L11.4 16M6.2 9.5L13 6M5.4 13L12 10" stroke="#5a9ae0" stroke-width="0.6" fill="none"/></svg>
<svg class="abs" style="left:837px;top:69px" width="20" height="20" viewBox="0 0 20 20" ><path d="M10 1.5Q14 1.6 18.4 4.6Q18 10.5 10.6 17.6Q3 11 1.8 4.8Q6 1.6 10 1.5Z" fill="#0c1a3a"/><path d="M10 2Q6 2.2 2.4 4.8L10.4 8L17.8 4.8Q14 2.2 10 2Z" fill="#6a98e0"/><path d="M2.6 5.4L10.2 8.4L10.4 17Q3.6 11 2.6 5.4Z" fill="#2f58b0"/><path d="M17.8 5.4L10.8 8.4L10.9 16.8Q17 10.6 17.8 5.4Z" fill="#16306a"/></svg>
<svg class="abs" style="left:878px;top:69px" width="20" height="20" viewBox="0 0 20 20" ><path d="M0.8 3h4M2.8 1v4M0.8 7h4" stroke="#000" stroke-width="0.9"/><path d="M6.86 10.64L0.620000000000001 16.88" stroke="#8a8f9a" stroke-width="2.6" stroke-linecap="round"/><circle cx="10.5" cy="7" r="5.2" fill="#cfe0f4" stroke="#7f8796" stroke-width="1.5"/><path d="M8.9 4.4L13.3 7L8.9 9.6Z" fill="#8aa0c0" opacity="0.8"/><path d="M11.5 12.5L15.350000000000001 10.5L18.5 12.5V17.5L14.65 19.5L11.5 17.5Z" fill="#555" stroke="#333" stroke-width="0.5"/><path d="M11.5 12.5L14.65 14.5L18.5 12.5L15.350000000000001 10.5Z" fill="#8a8a8a"/><path d="M14.65 14.5V19.5L18.5 17.5V12.5Z" fill="#3b3b3b"/></svg>
<svg class="abs" style="left:904.5px;top:69px" width="20" height="20" viewBox="0 0 20 20" ><path d="M1 0.5L5 4.5M5 0.5L1 4.5" stroke="#2fb52f" stroke-width="1.3"/><path d="M14.5 0.5L18.5 4.5M18.5 0.5L14.5 4.5" stroke="#2fb52f" stroke-width="1.3"/><path d="M1 15.5L5 19.5M5 15.5L1 19.5" stroke="#2fb52f" stroke-width="1.3"/><path d="M14.5 15.5L18.5 19.5M18.5 15.5L14.5 19.5" stroke="#2fb52f" stroke-width="1.3"/><path d="M6.36 11.14L0.120000000000001 17.38" stroke="#8a8f9a" stroke-width="2.6" stroke-linecap="round"/><circle cx="10" cy="7.5" r="5.2" fill="#cfe0f4" stroke="#7f8796" stroke-width="1.5"/><path d="M8.4 4.9L12.8 7.5L8.4 10.1Z" fill="#8aa0c0" opacity="0.8"/><path d="M11 12.5L14.575 10.5L17.5 12.5V17.0L13.925 19.0L11 17.0Z" fill="#555" stroke="#333" stroke-width="0.5"/><path d="M11 12.5L13.925 14.5L17.5 12.5L14.575 10.5Z" fill="#8a8a8a"/><path d="M13.925 14.5V19.0L17.5 17.0V12.5Z" fill="#3b3b3b"/></svg>
<svg class="abs" style="left:930.7px;top:69px" width="20" height="20" viewBox="0 0 20 20" ><path d="M0.5 0.5L4.5 4.5M4.5 0.5L0.5 4.5" stroke="#2fb52f" stroke-width="1.3"/><path d="M15.5 0.5L19.5 4.5M19.5 0.5L15.5 4.5" stroke="#2fb52f" stroke-width="1.3"/><path d="M0.5 15.5L4.5 19.5M4.5 15.5L0.5 19.5" stroke="#2fb52f" stroke-width="1.3"/><path d="M15.5 15.5L19.5 19.5M19.5 15.5L15.5 19.5" stroke="#2fb52f" stroke-width="1.3"/><rect x="3.5" y="5" width="13" height="10" fill="url(#gvw)" stroke="#222" stroke-width="0.9"/><text x="10" y="13.2" font-size="8.5" font-weight="bold" text-anchor="middle" fill="#000" font-family="Liberation Sans,sans-serif">1:1</text></svg>
<svg class="abs" style="left:957.7px;top:69px" width="20" height="20" viewBox="0 0 20 20" ><path d="M4 15.5L15 4.5" stroke="#1f8a16" stroke-width="3"/><path d="M4 15.5L15 4.5" stroke="#4fd03a" stroke-width="1.6"/><path d="M18 1.5L16.5 8L11.5 3Z" fill="#3fc02c" stroke="#1f8a16" stroke-width="0.7"/><circle cx="3.6" cy="16" r="2.6" fill="url(#ggr)" stroke="#555" stroke-width="0.6"/></svg>
<svg class="abs" style="left:982px;top:69px" width="20" height="20" viewBox="0 0 20 20" ><path d="M3 10Q3 3.5 10 2.6L9.4 0.6L15.4 3.8L10.6 7.6L10.4 5.4Q6 6 6 10Z" fill="#3fc02c" stroke="#177a10" stroke-width="0.8"/><path d="M17 9.5Q17 16 10 17L10.6 19L4.6 15.8L9.4 12L9.6 14.2Q14 13.6 14 9.5Z" fill="#3fc02c" stroke="#177a10" stroke-width="0.8"/></svg>
<svg class="abs" style="left:1008.5px;top:69px" width="20" height="20" viewBox="0 0 20 20" ><g transform="translate(0,-0.5) scale(1.0)"><path d="M1 7.2Q9.5 -0.5 19 5.2Q16 9.2 9.5 9.2Q4 9.2 1 7.2Z" fill="#cfd3ea"/><circle cx="10" cy="5.6" r="3.3" fill="#56719f"/><circle cx="10" cy="5.6" r="1.5" fill="#1c2642"/><circle cx="8.9" cy="4.5" r="0.8" fill="#e8eefc"/><path d="M1 7.2Q9.5 -1.2 19 5.2" fill="none" stroke="#2c3452" stroke-width="1.7" stroke-linecap="round"/><path d="M1.5 7.8Q9 10.2 17 7.4" fill="none" stroke="#a08a98" stroke-width="0.7"/></g><circle cx="10" cy="13.2" r="6" fill="url(#gsm)" stroke="#c08a00" stroke-width="0.6"/><circle cx="7.8" cy="11.6" r="0.9" fill="#3a2a00"/><circle cx="12.2" cy="11.6" r="0.9" fill="#3a2a00"/><path d="M6.6 14.4Q10 17.6 13.4 14.4" fill="none" stroke="#3a2a00" stroke-width="0.9"/></svg>
<svg class="abs" style="left:1051.7px;top:69px" width="20" height="20" viewBox="0 0 20 20" ><g transform="translate(0,0) scale(1.0)"><path d="M1 11.5L11 6.5L19.5 11L10 17.5Z" fill="#eef2fa" stroke="#8a93a8" stroke-width="0.6"/><path d="M5 12.5V2.5" stroke="#1a7ae8" stroke-width="1.8"/><path d="M5 0L7.4 4H2.6Z" fill="#1a7ae8"/><path d="M5 12.5L13.5 6.8" stroke="#2fb52f" stroke-width="1.6"/><path d="M15.5 5.5L13.8 9L11.6 5.9Z" fill="#2fb52f"/><path d="M5 12.5L13 17.5" stroke="#e02020" stroke-width="1.8"/><path d="M15.5 19L10.8 18.6L13 15.4Z" fill="#e02020"/><circle cx="5" cy="12.5" r="1.8" fill="#f4f4f4" stroke="#555" stroke-width="0.6"/></g></svg>
<svg class="abs" style="left:1078px;top:69px" width="20" height="20" viewBox="0 0 20 20" ><g transform="translate(6,-1) scale(0.62)"><path d="M1 11.5L11 6.5L19.5 11L10 17.5Z" fill="#eef2fa" stroke="#8a93a8" stroke-width="0.6"/><path d="M5 12.5V2.5" stroke="#1a7ae8" stroke-width="1.8"/><path d="M5 0L7.4 4H2.6Z" fill="#1a7ae8"/><path d="M5 12.5L13.5 6.8" stroke="#2fb52f" stroke-width="1.6"/><path d="M15.5 5.5L13.8 9L11.6 5.9Z" fill="#2fb52f"/><path d="M5 12.5L13 17.5" stroke="#e02020" stroke-width="1.8"/><path d="M15.5 19L10.8 18.6L13 15.4Z" fill="#e02020"/><circle cx="5" cy="12.5" r="1.8" fill="#f4f4f4" stroke="#555" stroke-width="0.6"/></g><path d="M1 15L6 10L4 8L11 6L9 13L7.4 11.4L2.6 16.4Z" fill="#3fc02c" stroke="#177a10" stroke-width="0.7"/><rect x="9" y="13" width="9.5" height="5" fill="#e4e7ee" stroke="#777" stroke-width="1.2"/></svg>
<svg class="abs" style="left:1103.7px;top:69px" width="20" height="20" viewBox="0 0 20 20" ><g transform="translate(7,-1) scale(0.62)"><path d="M1 11.5L11 6.5L19.5 11L10 17.5Z" fill="#eef2fa" stroke="#8a93a8" stroke-width="0.6"/><path d="M5 12.5V2.5" stroke="#1a7ae8" stroke-width="1.8"/><path d="M5 0L7.4 4H2.6Z" fill="#1a7ae8"/><path d="M5 12.5L13.5 6.8" stroke="#2fb52f" stroke-width="1.6"/><path d="M15.5 5.5L13.8 9L11.6 5.9Z" fill="#2fb52f"/><path d="M5 12.5L13 17.5" stroke="#e02020" stroke-width="1.8"/><path d="M15.5 19L10.8 18.6L13 15.4Z" fill="#e02020"/><circle cx="5" cy="12.5" r="1.8" fill="#f4f4f4" stroke="#555" stroke-width="0.6"/></g><path d="M1 16L6 11L4 9L11 7L9 14L7.4 12.4L2.6 17.4Z" fill="#3fc02c" stroke="#177a10" stroke-width="0.7"/><path d="M12 19L6 18L8 16L3 11L5 9L10 14L12 12Z" fill="#3fc02c" stroke="#177a10" stroke-width="0.6"/></svg>
<svg class="abs" style="left:1147px;top:69px" width="20" height="20" viewBox="0 0 20 20" ><rect x="1.0" y="1.0" width="5.6" height="5.6" fill="#00c8e8"/><rect x="7.2" y="1.0" width="5.6" height="5.6" fill="#f0d800"/><rect x="13.4" y="1.0" width="5.6" height="5.6" fill="#10c818"/><rect x="1.0" y="7.2" width="5.6" height="5.6" fill="#f07800"/><rect x="7.2" y="7.2" width="5.6" height="5.6" fill="#a06010"/><rect x="13.4" y="7.2" width="5.6" height="5.6" fill="#f000d8"/><rect x="1.0" y="13.4" width="5.6" height="5.6" fill="#1010e0"/><rect x="7.2" y="13.4" width="5.6" height="5.6" fill="#089828"/><rect x="13.4" y="13.4" width="5.6" height="5.6" fill="#808080"/></svg>
<svg class="abs" style="left:1173px;top:69px" width="20" height="20" viewBox="0 0 20 20" ><rect x="2" y="1" width="15" height="18" fill="#eef1f8" stroke="#6a7384" stroke-width="1.4"/><rect x="4" y="3" width="11" height="1.6" fill="#f0a030"/><rect x="4" y="6" width="11" height="2" fill="#a8c8f0"/><rect x="4.0" y="9.5" width="3.2" height="2.6" fill="#10c818"/><rect x="7.8" y="9.5" width="3.2" height="2.6" fill="#f0d800"/><rect x="11.6" y="9.5" width="3.2" height="2.6" fill="#00c8e8"/><rect x="4.0" y="12.5" width="3.2" height="2.6" fill="#f07800"/><rect x="7.8" y="12.5" width="3.2" height="2.6" fill="#f000d8"/><rect x="11.6" y="12.5" width="3.2" height="2.6" fill="#1010e0"/><rect x="4.0" y="15.5" width="3.2" height="2.6" fill="#808080"/><rect x="7.8" y="15.5" width="3.2" height="2.6" fill="#e02020"/><rect x="11.6" y="15.5" width="3.2" height="2.6" fill="#089828"/></svg>
<svg class="abs" style="left:1199px;top:69px" width="20" height="20" viewBox="0 0 20 20" ><circle cx="10" cy="10" r="9.3" fill="#6aa63a" stroke="#3f6a1e" stroke-width="1"/><path d="M5 15.5L14 5" stroke="#e4e7ee" stroke-width="2.6" stroke-linecap="round"/><path d="M5.5 5L14.5 15.5" stroke="#c8ccd6" stroke-width="2.4" stroke-linecap="round"/><circle cx="5.8" cy="5.2" r="2.3" fill="none" stroke="#e4e7ee" stroke-width="1.5"/></svg>
<svg class="abs" style="left:1225px;top:69px" width="20" height="20" viewBox="0 0 20 20" ><rect x="1" y="1" width="18" height="18" fill="#e4ecf8" stroke="#3a5a9a" stroke-width="1"/><rect x="1" y="1" width="18" height="3" fill="#3a5a9a"/><path d="M3 6.5h3M7.5 6.5h3M12 6.5h3" stroke="#c8a020" stroke-width="1.8"/><path d="M4 9v8" stroke="#a05a20" stroke-width="2" stroke-dasharray="2 1.2"/><path d="M8 17L16 8" stroke="#7a8aa8" stroke-width="2.2" stroke-linecap="round"/><path d="M8.5 8.5L16.5 17" stroke="#4a78c8" stroke-width="2.2" stroke-linecap="round"/></svg>
<svg class="abs" style="left:1251px;top:69px" width="20" height="20" viewBox="0 0 20 20" ><rect x="2.5" y="3.5" width="15" height="14" fill="none" stroke="#223" stroke-width="1.2" stroke-dasharray="1.4 1.8"/><path d="M7 9.5L10 5.5L17.5 4.5L19 7.5L12.5 9.5L10.5 12Z" fill="#e8b880" stroke="#8a5a2a" stroke-width="0.7"/><circle cx="7" cy="13.5" r="3.2" fill="#fff6a0" stroke="#3a78d8" stroke-width="0.8"/><path d="M5 13.5h4M7 11.5v4" stroke="#2a58c8" stroke-width="1.2"/></svg>
<svg class="abs" style="left:1277px;top:69px" width="20" height="20" viewBox="0 0 20 20" ><path d="M5.5 3L18.5 1L14.5 16L1.5 18Z" fill="#e05050" stroke="#2f58c8" stroke-width="1.5"/><path d="M9.8 2.3L5.8 17.3M14.2 1.7L10.2 16.7M4.5 6.8L17.5 4.8M3.5 10.5L16.5 8.5M2.5 14.2L15.5 12.2" stroke="#f4c8c8" stroke-width="0.8"/><path d="M1.5 18L14.5 16L15.5 17.6L2.5 19.6Z" fill="#2f58c8"/></svg>

<!-- ===== viewport ===== -->
<div id="viewport" class="abs"></div>
<div id="lstrip2" class="abs"></div>
<div id="leftpanel" class="abs"></div>
<div class="abs" style="left:0;top:121px;width:58px;height:2px;background-image:repeating-linear-gradient(90deg,#fff 0 2px,transparent 2px 4px)"></div><div class="abs" style="left:0;top:374px;width:58px;height:2px;background-image:repeating-linear-gradient(90deg,#fff 0 2px,transparent 2px 4px)"></div><svg class="abs" style="left:7px;top:133px" width="20" height="20" viewBox="0 0 20 20" ><path d="M6 3.5Q2.5 4.5 3 8M4.6 5Q2.8 7 3.8 10M3.6 10.5Q4.2 12.6 6 13.4" stroke="#9fb4d4" stroke-width="1.2" fill="none"/><path d="M7.42 11.78L0.9399999999999995 18.259999999999998" stroke="#8a8f9a" stroke-width="2.6" stroke-linecap="round"/><circle cx="11.2" cy="8" r="5.4" fill="#cfe0f4" stroke="#7f8796" stroke-width="1.5"/><path d="M8.229999999999999 6.92A3.24 3.24 0 0 1 11.739999999999998 4.651999999999999" stroke="#fff" stroke-width="1.1" fill="none"/></svg>
<svg class="abs" style="left:34px;top:133px" width="20" height="20" viewBox="0 0 20 20" ><path d="M2 3L16 17M1 5.5l1.5 1.5M15 13l2 -2" stroke="#3c78d8" stroke-width="1.5"/><path d="M14.5 3.5L9.5 17" stroke="#3c78d8" stroke-width="1.5"/><g transform="translate(5,1.5)"><path d="M0 14L1.5 9.5L10.5 0.5L13.5 3.5L4.5 12.5Z" fill="#e59a3a" stroke="#7a4a12" stroke-width="0.7"/><path d="M0 14L1.5 9.5L4.5 12.5Z" fill="#f4dcb0" stroke="#7a4a12" stroke-width="0.5"/><path d="M0 14L0.8 11.8L2.2 13.2Z" fill="#222"/><path d="M9.4 1.6L12.4 4.6L13.5 3.5L10.5 0.5Z" fill="#d43b3b"/></g><path d="M15 0h5l-2.5 3z" fill="#000"/></svg>
<svg class="abs" style="left:7px;top:159px" width="20" height="20" viewBox="0 0 20 20" ><path d="M1 1L5 5M5 1L1 5" stroke="#2fb52f" stroke-width="1.3"/><path d="M15 1L19 5M19 1L15 5" stroke="#2fb52f" stroke-width="1.3"/><path d="M1 15L5 19M5 15L1 19" stroke="#2fb52f" stroke-width="1.3"/><path d="M15 15L19 19M19 15L15 19" stroke="#2fb52f" stroke-width="1.3"/><rect x="4.5" y="5" width="11" height="10" fill="url(#gvw)" stroke="#5a6a88" stroke-width="0.8"/></svg>
<svg class="abs" style="left:34px;top:159px" width="20" height="20" viewBox="0 0 20 20" ><path d="M8 6.5Q6 1.5 2.5 4Q0.5 7.5 6 10.5Q12 13 15.5 17Q19.5 15 17 10.5Q15 8 12 9" stroke="#3c78d8" stroke-width="1.6" fill="none"/><g transform="translate(5,1.5)"><path d="M0 14L1.5 9.5L10.5 0.5L13.5 3.5L4.5 12.5Z" fill="#e59a3a" stroke="#7a4a12" stroke-width="0.7"/><path d="M0 14L1.5 9.5L4.5 12.5Z" fill="#f4dcb0" stroke="#7a4a12" stroke-width="0.5"/><path d="M0 14L0.8 11.8L2.2 13.2Z" fill="#222"/><path d="M9.4 1.6L12.4 4.6L13.5 3.5L10.5 0.5Z" fill="#d43b3b"/></g><path d="M15 0h5l-2.5 3z" fill="#000"/></svg>
<svg class="abs" style="left:7px;top:185px" width="20" height="20" viewBox="0 0 20 20" ><path d="M0.8 3h4M2.8 1v4M0.8 7h4" stroke="#000" stroke-width="0.9"/><path d="M6.720000000000001 11.28L0.2400000000000002 17.759999999999998" stroke="#8a8f9a" stroke-width="2.6" stroke-linecap="round"/><circle cx="10.5" cy="7.5" r="5.4" fill="#cfe0f4" stroke="#7f8796" stroke-width="1.5"/><path d="M8.9 4.9L13.3 7.5L8.9 10.1Z" fill="#8aa0c0" opacity="0.8"/><path d="M11.5 13L15.350000000000001 11L18.5 13V18L14.65 20L11.5 18Z" fill="#555" stroke="#333" stroke-width="0.5"/><path d="M11.5 13L14.65 15L18.5 13L15.350000000000001 11Z" fill="#8a8a8a"/><path d="M14.65 15V20L18.5 18V13Z" fill="#3b3b3b"/><path d="M15 0h5l-2.5 3z" fill="#000"/></svg>
<svg class="abs" style="left:34px;top:185px" width="20" height="20" viewBox="0 0 20 20" ><path d="M2.5 3.5H16V8.5H13.5V12.5H16V18.5H2.5Z" fill="none" stroke="#f2ea00" stroke-width="1.6"/><path d="M5 10L8.6 15.4L15.6 5.6" fill="none" stroke="#2a9a1a" stroke-width="3.6" stroke-linejoin="round"/><path d="M5 10L8.6 15.4L15.6 5.6" fill="none" stroke="#5ad83a" stroke-width="2.2" stroke-linejoin="round"/><path d="M15 0h5l-2.5 3z" fill="#000"/></svg>
<svg class="abs" style="left:7px;top:210px" width="20" height="20" viewBox="0 0 20 20" ><g transform="translate(0,0.5) scale(1.0)"><path d="M1 11.5L11 6.5L19.5 11L10 17.5Z" fill="#eef2fa" stroke="#8a93a8" stroke-width="0.6"/><path d="M5 12.5V2.5" stroke="#1a7ae8" stroke-width="1.8"/><path d="M5 0L7.4 4H2.6Z" fill="#1a7ae8"/><path d="M5 12.5L13.5 6.8" stroke="#2fb52f" stroke-width="1.6"/><path d="M15.5 5.5L13.8 9L11.6 5.9Z" fill="#2fb52f"/><path d="M5 12.5L13 17.5" stroke="#e02020" stroke-width="1.8"/><path d="M15.5 19L10.8 18.6L13 15.4Z" fill="#e02020"/><circle cx="5" cy="12.5" r="1.8" fill="#f4f4f4" stroke="#555" stroke-width="0.6"/></g><path d="M15 0h5l-2.5 3z" fill="#000"/></svg>
<svg class="abs" style="left:34px;top:210px" width="20" height="20" viewBox="0 0 20 20" ><path d="M1.5 14Q2 1 6 3.5Q9 6 11 12Q13.5 19 17.5 16Q19 13 17.8 10" stroke="#3c78d8" stroke-width="1.6" fill="none"/><g transform="translate(5,1.5)"><path d="M0 14L1.5 9.5L10.5 0.5L13.5 3.5L4.5 12.5Z" fill="#e59a3a" stroke="#7a4a12" stroke-width="0.7"/><path d="M0 14L1.5 9.5L4.5 12.5Z" fill="#f4dcb0" stroke="#7a4a12" stroke-width="0.5"/><path d="M0 14L0.8 11.8L2.2 13.2Z" fill="#222"/><path d="M9.4 1.6L12.4 4.6L13.5 3.5L10.5 0.5Z" fill="#d43b3b"/></g><path d="M15 0h5l-2.5 3z" fill="#000"/></svg>
<svg class="abs" style="left:7px;top:237px" width="20" height="20" viewBox="0 0 20 20" ><path d="M1 1.2h8.5l2 1.6h-8.5z" fill="#8fa4ee" stroke="#5060a8" stroke-width="0.4"/><path d="M1 2.6h8.5l2 1.6h-8.5z" fill="#eef0f8" stroke="#8088a8" stroke-width="0.4"/><path d="M1 4.2h8.5l2 1.6h-8.5z" fill="#8fa4ee" stroke="#5060a8" stroke-width="0.4"/><path d="M1 5.8h8.5l2 1.6h-8.5z" fill="#eef0f8" stroke="#8088a8" stroke-width="0.4"/><path d="M1 7.4h8.5l2 1.6h-8.5z" fill="#c8c8d0" stroke="#707080" stroke-width="0.4"/><ellipse cx="10.5" cy="14.2" rx="6.8" ry="4.3" fill="#b98a72" stroke="#6a4632" stroke-width="0.7"/><circle cx="7.6" cy="15.2" r="1.6" fill="#1a4ad8"/><circle cx="11.4" cy="15.4" r="1.6" fill="#12a82a"/><circle cx="13.6" cy="12.6" r="1.5" fill="#d81a1a"/><path d="M17.5 0.8L10 12" stroke="#b8641a" stroke-width="1.8"/><path d="M10.6 11L8.8 14" stroke="#444" stroke-width="1.6"/><path d="M15 0h5l-2.5 3z" fill="#000"/></svg>
<svg class="abs" style="left:34px;top:237px" width="20" height="20" viewBox="0 0 20 20" ><path d="M6 4.5L17.5 1.5L14 15.5L1.5 18.5Z" fill="#a9c8f4" stroke="#2f68d8" stroke-width="1.4"/><path d="M11.6 3L7.8 17M3.8 11.6L15.8 8.6" stroke="#e8f0fc" stroke-width="1.3"/><path d="M1.5 18.5L14 15.5L15 17L2.5 20Z" fill="#2f58c8"/><path d="M15 0h5l-2.5 3z" fill="#000"/></svg>
<svg class="abs" style="left:7px;top:263px" width="20" height="20" viewBox="0 0 20 20" ><g transform="translate(2,2.4) scale(1.12)"><path d="M2.2 7.2A5.6 5.2 0 0 1 11.6 3.6" fill="none" stroke="#3568a8" stroke-width="3.6"/><path d="M2.2 7.2A5.6 5.2 0 0 1 11.6 3.6" fill="none" stroke="#6a9fe0" stroke-width="2.6"/><path d="M13.9 0.6L14.2 7.4L8.4 5.6Z" fill="#6a9fe0" stroke="#3568a8" stroke-width="0.6"/><path d="M12.4 7.4A5.6 5.2 0 0 1 3 11" fill="none" stroke="#3568a8" stroke-width="3.6"/><path d="M12.4 7.4A5.6 5.2 0 0 1 3 11" fill="none" stroke="#8ab8ee" stroke-width="2.6"/><path d="M0.7 14L0.4 7.2L6.2 9Z" fill="#8ab8ee" stroke="#3568a8" stroke-width="0.6"/></g><path d="M15 0h5l-2.5 3z" fill="#000"/></svg>
<svg class="abs" style="left:34px;top:263px" width="20" height="20" viewBox="0 0 20 20" ><ellipse cx="12" cy="17" rx="7" ry="2" fill="#000" opacity="0.25"/><path d="M2.5 5.5L10 2.5L17.5 5.5L10 8.8Z" fill="#c8c8c4" stroke="#555" stroke-width="0.5"/><path d="M2.5 5.5V14L10 18V8.8Z" fill="#8a8a86" stroke="#555" stroke-width="0.5"/><path d="M17.5 5.5V14L10 18V8.8Z" fill="#5c5c58" stroke="#444" stroke-width="0.5"/><path d="M15 0h5l-2.5 3z" fill="#000"/></svg>
<svg class="abs" style="left:7px;top:288px" width="20" height="20" viewBox="0 0 20 20" ><ellipse cx="9.5" cy="18" rx="6" ry="1.4" fill="#000" opacity="0.22"/><text x="9.5" y="15.5" font-size="19" font-weight="bold" fill="#4a7ed0" stroke="#2a58a8" stroke-width="0.5" text-anchor="middle" font-family="Liberation Sans,sans-serif">?</text><path d="M15 0h5l-2.5 3z" fill="#000"/></svg>
<svg class="abs" style="left:34px;top:288px" width="20" height="20" viewBox="0 0 20 20" ><path d="M2.5 4V18M17.5 4V18" stroke="#555" stroke-width="1.6"/><path d="M4 6.5H16" stroke="#e8e000" stroke-width="1.8"/><path d="M3 6.5L6.5 4.3V8.7ZM17 6.5L13.5 4.3V8.7Z" fill="#e8e000"/><path d="M15 0h5l-2.5 3z" fill="#000"/></svg>
<svg class="abs" style="left:7px;top:314px" width="20" height="20" viewBox="0 0 20 20" ><ellipse cx="12" cy="17.6" rx="6" ry="1.6" fill="#000" opacity="0.3"/><path d="M3 5.5H16L14.5 17.5H4.5Z" fill="#a8d0f0" stroke="#4a78a8" stroke-width="0.8"/><ellipse cx="9.5" cy="5.5" rx="6.8" ry="1.8" fill="#c8e0f8" stroke="#4a78a8" stroke-width="0.8"/><path d="M8 2h3.5l1 3.5h-5.5z" fill="#f0e020"/><path d="M7 8.5L12 15M12 8.5L7 15" stroke="#d8f0a0" stroke-width="1.6"/><path d="M15 0h5l-2.5 3z" fill="#000"/></svg>
<svg class="abs" style="left:34px;top:314px" width="20" height="20" viewBox="0 0 20 20" ><g transform="translate(2,0.5)"><path d="M7.5 1L0.5 6.5L7.5 11.5V8.4Q12 8 12 12Q12 15 8 16.5Q16 15.5 16 10.5Q16 4.6 7.5 4.4Z" fill="#b8b8b8" stroke="#8a8a8a" stroke-width="0.6"/></g><ellipse cx="11" cy="18.6" rx="6" ry="1.1" fill="#000" opacity="0.2"/><path d="M15 0h5l-2.5 3z" fill="#000"/></svg>
<svg class="abs" style="left:7px;top:341px" width="20" height="20" viewBox="0 0 20 20" ><rect x="1" y="1" width="3.4" height="12" fill="#9aa0a8" stroke="#444" stroke-width="0.5"/><path d="M2.7 13l1.2 4" stroke="#e8a020" stroke-width="1.6"/><circle cx="11" cy="8.5" r="6" fill="none" stroke="#8a3a1a" stroke-width="1.3"/><path d="M11 0.5V16.5M3 8.5H19M5.3 2.8L16.7 14.2M16.7 2.8L5.3 14.2" stroke="#8a3a1a" stroke-width="1"/><circle cx="11" cy="8.5" r="1.8" fill="#f0b020"/><path d="M1 15.5L8 12.5L18 14L11 18.5ZM3 18.5L12 15" fill="#f08a10" stroke="#f08a10" stroke-width="1.2"/><path d="M15 0h5l-2.5 3z" fill="#000"/></svg>
<svg class="abs" style="left:34px;top:341px" width="20" height="20" viewBox="0 0 20 20" ><path d="M5 7h10.5l3.5 3.5v8.5h-14z" fill="url(#gpg)" stroke="#222" stroke-width="0.9"/><path d="M15.5 7v3.5h3.5" fill="#fff" stroke="#222" stroke-width="0.8"/><path d="M1 3.5h5.2l1.2 1.5h5.6v8h-12z" fill="#e8c45a" stroke="#b08a22" stroke-width="0.6"/><path d="M1 13l2.2 -6.050000000000001h12.5l-2.4 6.050000000000001z" fill="url(#gfo)" stroke="#b08a22" stroke-width="0.6"/><path d="M7.5 6.5Q8.0 2.0 12.5 2.5V0.5L16.5 3.7L12.5 7.1V4.9Q9.5 4.5 7.5 6.5Z" fill="#3fb52f" stroke="#1f7a16" stroke-width="0.5"/></svg>

<div class="vb" style="left:64px;top:113px"></div><svg class="abs" style="left:64px;top:113px" width="24" height="24" viewBox="0 0 24 24" ><rect x="3.5" y="4.2" width="17" height="3.6" rx="0.8" fill="#44598a"/><rect x="3.5" y="10.2" width="17" height="3.6" rx="0.8" fill="#44598a"/><rect x="3.5" y="16.2" width="17" height="3.6" rx="0.8" fill="#44598a"/><path d="M4 6h16M4 12h16M4 18h16" stroke="#6a80b0" stroke-width="0.8"/></svg>
<div class="vb" style="left:92px;top:113px"></div><svg class="abs" style="left:92px;top:113px" width="24" height="24" viewBox="0 0 24 24" ><path d="M3.2 3.5L7.2 7.5M7.2 3.5L3.2 7.5" stroke="#4fd03a" stroke-width="1.3"/><path d="M17 3.5L21 7.5M21 3.5L17 7.5" stroke="#4fd03a" stroke-width="1.3"/><path d="M3.2 17.5L7.2 21.5M7.2 17.5L3.2 21.5" stroke="#4fd03a" stroke-width="1.3"/><path d="M17 17.5L21 21.5M21 17.5L17 21.5" stroke="#4fd03a" stroke-width="1.3"/><rect x="6.8" y="7.5" width="10.8" height="9.5" fill="url(#gvw)" stroke="#5a6a88" stroke-width="0.8"/></svg>
<div class="vb" style="left:120px;top:113px"></div><svg class="abs" style="left:120px;top:113px" width="24" height="24" viewBox="0 0 24 24" ><path d="M9 5.5Q5 6.5 5.4 10.5M7.5 7Q5.5 9 6.6 12.5M6.4 12.5Q7 15 9 16" stroke="#c8d8ee" stroke-width="1.4" fill="none"/><path d="M10.68 14.52L3.960000000000001 21.24" stroke="#8a8f9a" stroke-width="2.6" stroke-linecap="round"/><circle cx="14.6" cy="10.6" r="5.6" fill="#d8e8f8" stroke="#7f8796" stroke-width="1.5"/><path d="M11.52 9.48A3.36 3.36 0 0 1 15.16 7.128" stroke="#fff" stroke-width="1.1" fill="none"/></svg>
<div class="vb" style="left:148px;top:113px"></div><svg class="abs" style="left:148px;top:113px" width="24" height="24" viewBox="0 0 24 24" ><path d="M2.6 14L12.4 7.5L21.5 13L12 20.5Z" fill="none" stroke="#555c70" stroke-width="0.6"/><path d="M11.2 14.5V5" stroke="#1a7ae8" stroke-width="2"/><path d="M11.2 2.5L13.8 6.8H8.6Z" fill="#1a7ae8"/><path d="M11.2 14.5L18.5 9.6" stroke="#3fc02c" stroke-width="1.8"/><path d="M20.6 8L18.9 11.6L16.6 8.4Z" fill="#3fc02c"/><path d="M11.2 14.5L18 19.4" stroke="#e02020" stroke-width="2"/><path d="M20.6 21.2L15.8 20.4L18.4 17.2Z" fill="#e02020"/><circle cx="11.2" cy="14.5" r="1.7" fill="#f4f4f4" stroke="#444" stroke-width="0.6"/></svg>
<div class="vb" style="left:176px;top:113px"></div><svg class="abs" style="left:176px;top:113px" width="24" height="24" viewBox="0 0 24 24" ><path d="M12.5 2.6L21.8 6.4L12.5 10.4L3.2 6.4Z" fill="url(#ggn)"/><path d="M12.5 2.6L21.8 6.4M21.8 6.4L12.5 10.4M12.5 10.4L3.2 6.4M3.2 6.4L12.5 2.6M3.2 6.4L3.2 17.4M21.8 6.4L21.8 17.4M12.5 10.4L12.5 21.6M3.2 17.4L12.5 21.6M12.5 21.6L21.8 17.4M12.5 2.6L12.5 13.6M12.5 13.6L3.2 17.4M12.5 13.6L21.8 17.4" stroke="#0a0a0a" stroke-width="1.1" fill="none" stroke-linejoin="round"/></svg>
<div class="vb" style="left:204px;top:113px"></div><svg class="abs" style="left:204px;top:113px" width="24" height="24" viewBox="0 0 24 24" ><path d="M3.2 17.4L12.5 13.6L21.8 17.4L12.5 21.6Z" fill="url(#ggn)"/><path d="M12.5 2.6L21.8 6.4M21.8 6.4L12.5 10.4M12.5 10.4L3.2 6.4M3.2 6.4L12.5 2.6M3.2 6.4L3.2 17.4M21.8 6.4L21.8 17.4M12.5 10.4L12.5 21.6M3.2 17.4L12.5 21.6M12.5 21.6L21.8 17.4M12.5 2.6L12.5 13.6M12.5 13.6L3.2 17.4M12.5 13.6L21.8 17.4" stroke="#0a0a0a" stroke-width="1.1" fill="none" stroke-linejoin="round"/></svg>
<div class="vb" style="left:232px;top:113px"></div><svg class="abs" style="left:232px;top:113px" width="24" height="24" viewBox="0 0 24 24" ><path d="M3.2 6.4L12.5 2.6L12.5 13.6L3.2 17.4Z" fill="url(#ggn)"/><path d="M12.5 2.6L21.8 6.4M21.8 6.4L12.5 10.4M12.5 10.4L3.2 6.4M3.2 6.4L12.5 2.6M3.2 6.4L3.2 17.4M21.8 6.4L21.8 17.4M12.5 10.4L12.5 21.6M3.2 17.4L12.5 21.6M12.5 21.6L21.8 17.4M12.5 2.6L12.5 13.6M12.5 13.6L3.2 17.4M12.5 13.6L21.8 17.4" stroke="#0a0a0a" stroke-width="1.1" fill="none" stroke-linejoin="round"/></svg>
<div class="vb" style="left:260px;top:113px"></div><svg class="abs" style="left:260px;top:113px" width="24" height="24" viewBox="0 0 24 24" ><path d="M12.5 10.4L21.8 6.4L21.8 17.4L12.5 21.6Z" fill="url(#ggn)"/><path d="M12.5 2.6L21.8 6.4M21.8 6.4L12.5 10.4M12.5 10.4L3.2 6.4M3.2 6.4L12.5 2.6M3.2 6.4L3.2 17.4M21.8 6.4L21.8 17.4M12.5 10.4L12.5 21.6M3.2 17.4L12.5 21.6M12.5 21.6L21.8 17.4M12.5 2.6L12.5 13.6M12.5 13.6L3.2 17.4M12.5 13.6L21.8 17.4" stroke="#0a0a0a" stroke-width="1.1" fill="none" stroke-linejoin="round"/></svg>
<div class="vb" style="left:288px;top:113px"></div><svg class="abs" style="left:288px;top:113px" width="24" height="24" viewBox="0 0 24 24" ><path d="M3.2 6.4L12.5 10.4L12.5 21.6L3.2 17.4Z" fill="url(#ggn)"/><path d="M12.5 2.6L21.8 6.4M21.8 6.4L12.5 10.4M12.5 10.4L3.2 6.4M3.2 6.4L12.5 2.6M3.2 6.4L3.2 17.4M21.8 6.4L21.8 17.4M12.5 10.4L12.5 21.6M3.2 17.4L12.5 21.6M12.5 21.6L21.8 17.4M12.5 2.6L12.5 13.6M12.5 13.6L3.2 17.4M12.5 13.6L21.8 17.4" stroke="#0a0a0a" stroke-width="1.1" fill="none" stroke-linejoin="round"/></svg>
<div class="vb" style="left:316px;top:113px"></div><svg class="abs" style="left:316px;top:113px" width="24" height="24" viewBox="0 0 24 24" ><path d="M12.5 2.6L21.8 6.4L21.8 17.4L12.5 13.6Z" fill="url(#ggn)"/><path d="M12.5 2.6L21.8 6.4M21.8 6.4L12.5 10.4M12.5 10.4L3.2 6.4M3.2 6.4L12.5 2.6M3.2 6.4L3.2 17.4M21.8 6.4L21.8 17.4M12.5 10.4L12.5 21.6M3.2 17.4L12.5 21.6M12.5 21.6L21.8 17.4M12.5 2.6L12.5 13.6M12.5 13.6L3.2 17.4M12.5 13.6L21.8 17.4" stroke="#0a0a0a" stroke-width="1.1" fill="none" stroke-linejoin="round"/></svg>
<div class="vb" style="left:344px;top:113px"></div><svg class="abs" style="left:344px;top:113px" width="24" height="24" viewBox="0 0 24 24" ><path d="M12.5 2.6L21.8 6.4L12.5 10.4L3.2 6.4Z" fill="#4ee03c"/><path d="M3.2 6.4L12.5 10.4L12.5 21.6L3.2 17.4Z" fill="#22b416"/><path d="M12.5 10.4L21.8 6.4L21.8 17.4L12.5 21.6Z" fill="#38cc28"/><path d="M12.5 10.4V21.6M3.2 6.4L12.5 10.4L21.8 6.4" stroke="#7af06a" stroke-width="0.7" fill="none"/></svg>
<div class="vb" style="left:64px;top:141px"></div><svg class="abs" style="left:64px;top:141px" width="24" height="24" viewBox="0 0 24 24" ><path d="M7.5 6.6V18.4A5.25 2.1 0 0 0 18.0 18.4V6.6" fill="none" stroke="#16161e" stroke-width="1.0"/><ellipse cx="12.75" cy="6.6" rx="5.25" ry="2.1" fill="none" stroke="#16161e" stroke-width="1.0"/><path d="M7.5 18.4A5.25 2.1 0 0 1 18.0 18.4" fill="none" stroke="#16161e" stroke-width="0.8"/></svg>
<div class="vb" style="left:64px;top:169px"></div><svg class="abs" style="left:64px;top:169px" width="24" height="24" viewBox="0 0 24 24" ><path d="M7.5 6.6V18.4A5.25 2.1 0 0 0 18.0 18.4V6.6" fill="none" stroke="#16161e" stroke-width="1.0"/><ellipse cx="12.75" cy="6.6" rx="5.25" ry="2.1" fill="none" stroke="#16161e" stroke-width="1.0"/></svg>
<div class="abs" style="left:64px;top:197px;width:24px;height:24px;box-sizing:border-box;background:#8a8770;border:1px solid #e0bd62"></div><svg class="abs" style="left:64px;top:197px" width="24" height="24" viewBox="0 0 24 24" ><ellipse cx="16.25" cy="19.9" rx="5.25" ry="1.6" fill="#000" opacity="0.35"/><path d="M7.5 6.6V18.4A5.25 2.1 0 0 0 18.0 18.4V6.6" fill="url(#gcb)" stroke="#101830" stroke-width="1.0"/><ellipse cx="12.75" cy="6.6" rx="5.25" ry="2.1" fill="#8db4f0" stroke="#101830" stroke-width="1.0"/></svg>
<div class="vb" style="left:64px;top:225px"></div><svg class="abs" style="left:64px;top:225px" width="24" height="24" viewBox="0 0 24 24" ><ellipse cx="16.25" cy="19.9" rx="5.25" ry="1.6" fill="#000" opacity="0.35"/><path d="M7.5 6.6V18.4A5.25 2.1 0 0 0 18.0 18.4V6.6" fill="url(#gcl)" stroke="#30384a" stroke-width="1.0"/><ellipse cx="12.75" cy="6.6" rx="5.25" ry="2.1" fill="#eef2fb" stroke="#30384a" stroke-width="1.0"/></svg>
<div class="vb" style="left:64px;top:253px"></div><svg class="abs" style="left:64px;top:253px" width="24" height="24" viewBox="0 0 24 24" ><path d="M8 6.6V18.4A4.0 2.1 0 0 0 16 18.4V6.6" fill="none" stroke="#16161e" stroke-width="1.0"/><ellipse cx="12.0" cy="6.6" rx="4.0" ry="2.1" fill="none" stroke="#16161e" stroke-width="1.0"/><path d="M9.5 6.3L12.5 18.7M12.9 6.3L10.5 18.7M14.5 6.5L14.1 18.7M9.5 12.2L15.8 8.7M8.5 15.7L14.9 12.7" stroke="#16161e" stroke-width="0.6" fill="none"/></svg>

<svg class="abs" style="left:0;top:0" width="1920" height="1048" viewBox="0 0 1920 1048">
<defs><radialGradient id="gboss" cx="0.75" cy="0.45" r="0.8"><stop offset="0" stop-color="#aaaa95"/><stop offset="0.6" stop-color="#929280"/><stop offset="1" stop-color="#5e5e52"/></radialGradient><linearGradient id="ghole" x1="0.95" y1="0.1" x2="0.1" y2="0.9"><stop offset="0" stop-color="#2c2c2c"/><stop offset="0.5" stop-color="#a8a8a8"/><stop offset="1" stop-color="#ffffff"/></linearGradient><linearGradient id="gholeA" x1="0.95" y1="0.1" x2="0.1" y2="0.9"><stop offset="0" stop-color="#26263a"/><stop offset="0.5" stop-color="#8485aa"/><stop offset="1" stop-color="#d6d7f2"/></linearGradient><linearGradient id="gcylb" x1="0" y1="0" x2="0.35" y2="1"><stop offset="0" stop-color="#2c8a34"/><stop offset="0.35" stop-color="#3a9a40"/><stop offset="1" stop-color="#1c5a22"/></linearGradient></defs>
<ellipse cx="556" cy="330" rx="19" ry="25" fill="url(#gboss)"/>
<ellipse cx="557" cy="536" rx="20" ry="27.5" fill="url(#gboss)"/>
<polygon points="756.9,777.0 1164.9,723.0 947.9,641.0 539.9,695.0" fill="#c8c8c8" stroke="#080808" stroke-width="0.8" stroke-linejoin="round" />
<polygon points="756.9,777.0 539.9,695.0 540.4,726.0 757.4,808.0" fill="#dedede" stroke="#080808" stroke-width="0.8" stroke-linejoin="round" />
<polygon points="756.9,777.0 1164.9,723.0 1165.4,754.0 757.4,808.0" fill="#9e9e9e" stroke="#080808" stroke-width="0.8" stroke-linejoin="round" />
<polygon points="756.9,777.0 539.9,695.0 540.0,699.5 757.0,781.5" fill="#f6f6f6" stroke="#080808" stroke-width="0.5" stroke-linejoin="round" />
<polygon points="756.9,777.0 761.7,777.1 762.2,807.8 757.4,808.0" fill="#f0f0f0" stroke="#080808" stroke-width="0.5" stroke-linejoin="round" />
<polygon points="756.9,777.0 1164.9,723.0 1161.9,723.4 753.9,777.4" fill="#e4e4e4" stroke="#080808" stroke-width="0.5" stroke-linejoin="round" />
<polygon points="756.9,777.0 1164.9,723.0 1164.9,727.0 756.9,781.0" fill="#efefef" stroke="#080808" stroke-width="0.5" stroke-linejoin="round" />
<polygon points="776.8,671.6 559.8,589.6 561.5,684.1 778.5,766.1" fill="#dedede" stroke="#080808" stroke-width="0.8" stroke-linejoin="round" />
<polygon points="776.8,671.6 846.0,662.5 847.7,757.0 778.5,766.1" fill="#9e9e9e" stroke="#080808" stroke-width="0.8" stroke-linejoin="round" />
<polygon points="776.8,671.6 559.8,589.6 559.9,594.6 776.9,676.6" fill="#f6f6f6" stroke="#080808" stroke-width="0.5" stroke-linejoin="round" />
<polygon points="776.8,671.6 782.6,671.5 784.3,766.0 778.5,766.1" fill="#ececec" stroke="#080808" stroke-width="0.5" stroke-linejoin="round" />
<polygon points="1088.0,630.4 871.0,548.4 872.7,642.9 1089.7,724.9" fill="#e8e8e8" stroke="#080808" stroke-width="0.8" stroke-linejoin="round" />
<polygon points="1088.0,630.4 1141.2,623.4 1142.9,717.9 1089.7,724.9" fill="#9e9e9e" stroke="#080808" stroke-width="0.8" stroke-linejoin="round" />
<polygon points="771.6,381.1 554.6,299.1 559.8,589.1 776.8,671.1" fill="#3a3a3a" stroke="#080808" stroke-width="0" stroke-linejoin="round" />
<polygon points="771.6,381.1 1136.0,332.9 1141.2,622.9 776.8,671.1" fill="#3a3a3a" stroke="#080808" stroke-width="0" stroke-linejoin="round" />
<polygon points="775.9,621.6 558.9,539.6 559.8,588.1 776.8,670.1" fill="#dedede" stroke="#080808" stroke-width="0.8" stroke-linejoin="round" />
<polygon points="775.9,621.6 1140.3,573.4 1141.2,621.9 776.8,670.1" fill="#9e9e9e" stroke="#080808" stroke-width="0.8" stroke-linejoin="round" />
<polygon points="775.9,621.6 558.9,539.6 559.0,545.6 776.0,627.6" fill="#f6f6f6" stroke="#080808" stroke-width="0.5" stroke-linejoin="round" />
<polygon points="775.9,621.6 1140.3,573.4 1140.4,577.0 776.0,625.2" fill="#e9e9e9" stroke="#080808" stroke-width="0.5" stroke-linejoin="round" />
<polygon points="775.9,621.6 781.7,621.5 782.6,670.0 776.8,670.1" fill="#ececec" stroke="#080808" stroke-width="0.5" stroke-linejoin="round" />
<polygon points="775.0,568.6 558.0,486.6 558.9,537.6 775.9,619.6" fill="#dedede" stroke="#080808" stroke-width="0.8" stroke-linejoin="round" />
<polygon points="775.0,568.6 1139.4,520.4 1140.3,571.4 775.9,619.6" fill="#9e9e9e" stroke="#080808" stroke-width="0.8" stroke-linejoin="round" />
<polygon points="775.0,568.6 558.0,486.6 558.1,492.6 775.1,574.6" fill="#f6f6f6" stroke="#080808" stroke-width="0.5" stroke-linejoin="round" />
<polygon points="775.0,568.6 1139.4,520.4 1139.4,524.0 775.0,572.2" fill="#e9e9e9" stroke="#080808" stroke-width="0.5" stroke-linejoin="round" />
<polygon points="775.0,568.6 780.8,568.5 781.7,619.5 775.9,619.6" fill="#ececec" stroke="#080808" stroke-width="0.5" stroke-linejoin="round" />
<polygon points="773.7,497.6 556.7,415.6 557.9,484.6 774.9,566.6" fill="#dedede" stroke="#080808" stroke-width="0.8" stroke-linejoin="round" />
<polygon points="773.7,497.6 1138.1,449.4 1139.3,518.4 774.9,566.6" fill="#9e9e9e" stroke="#080808" stroke-width="0.8" stroke-linejoin="round" />
<polygon points="773.7,497.6 556.7,415.6 556.8,421.6 773.8,503.6" fill="#f6f6f6" stroke="#080808" stroke-width="0.5" stroke-linejoin="round" />
<polygon points="773.7,497.6 1138.1,449.4 1138.2,453.0 773.8,501.2" fill="#e9e9e9" stroke="#080808" stroke-width="0.5" stroke-linejoin="round" />
<polygon points="773.7,497.6 779.5,497.5 780.7,566.5 774.9,566.6" fill="#ececec" stroke="#080808" stroke-width="0.5" stroke-linejoin="round" />
<polygon points="772.0,403.1 555.0,321.1 556.7,413.6 773.7,495.6" fill="#dedede" stroke="#080808" stroke-width="0.8" stroke-linejoin="round" />
<polygon points="772.0,403.1 1136.4,354.9 1138.1,447.4 773.7,495.6" fill="#9e9e9e" stroke="#080808" stroke-width="0.8" stroke-linejoin="round" />
<polygon points="772.0,403.1 555.0,321.1 555.1,327.1 772.1,409.1" fill="#f6f6f6" stroke="#080808" stroke-width="0.5" stroke-linejoin="round" />
<polygon points="772.0,403.1 1136.4,354.9 1136.5,358.5 772.1,406.7" fill="#e9e9e9" stroke="#080808" stroke-width="0.5" stroke-linejoin="round" />
<polygon points="772.0,403.1 777.8,403.0 779.5,495.5 773.7,495.6" fill="#ececec" stroke="#080808" stroke-width="0.5" stroke-linejoin="round" />
<polygon points="770.4,312.1 553.4,230.1 555.0,319.6 772.0,401.6" fill="#a3a4c7" stroke="#080808" stroke-width="0.8" stroke-linejoin="round" />
<polygon points="770.4,312.1 1134.8,263.9 1136.4,353.4 772.0,401.6" fill="#6e6f88" stroke="#080808" stroke-width="0.8" stroke-linejoin="round" />
<polygon points="770.4,312.1 776.2,312.0 777.8,401.5 772.0,401.6" fill="#b4b5d8" stroke="#080808" stroke-width="0.5" stroke-linejoin="round" />
<polygon points="770.4,312.1 1134.8,263.9 1134.9,273.9 770.5,322.1" fill="#9697bb" stroke="#080808" stroke-width="0.5" stroke-linejoin="round" />
<polygon points="770.4,312.1 1134.8,263.9 1134.8,266.1 770.4,314.3" fill="#2e2e40" stroke="#080808" stroke-width="0" stroke-linejoin="round" />
<polygon points="748.0,284.0 1156.0,230.0 939.0,148.0 531.0,202.0" fill="#c3c3c3" stroke="#080808" stroke-width="0.8" stroke-linejoin="round" />
<polygon points="748.0,284.0 531.0,202.0 531.6,233.0 748.6,315.0" fill="#dedede" stroke="#080808" stroke-width="0.8" stroke-linejoin="round" />
<polygon points="748.0,284.0 1156.0,230.0 1156.6,261.0 748.6,315.0" fill="#9e9e9e" stroke="#080808" stroke-width="0.8" stroke-linejoin="round" />
<polygon points="748.0,284.0 531.0,202.0 531.1,205.0 748.1,287.0" fill="#f6f6f6" stroke="#080808" stroke-width="0.4" stroke-linejoin="round" />
<polygon points="748.0,284.0 1156.0,230.0 1156.1,234.0 748.1,288.0" fill="#c9c9c9" stroke="#080808" stroke-width="0.4" stroke-linejoin="round" />
<polygon points="748.0,284.0 752.8,284.1 753.4,314.8 748.6,315.0" fill="#f0f0f0" stroke="#080808" stroke-width="0.5" stroke-linejoin="round" />
<ellipse cx="630.8" cy="210.8" rx="13.2" ry="3.0" fill="#a4a4a4" stroke="#0a0a0a" stroke-width="1"/><ellipse cx="630.8" cy="211.5" rx="8.712" ry="1.7999999999999998" fill="#9fa0c8" stroke="#0a0a0a" stroke-width="1"/><path d="M622.616 211.8Q630.8 214.85000000000002 638.9839999999999 211.8" fill="none" stroke="#26262e" stroke-width="1.1"/><path d="M619.448 211.9Q630.8 216.05 642.1519999999999 211.9" fill="none" stroke="#ececec" stroke-width="0.7"/>
<ellipse cx="693.1" cy="233.75" rx="13.2" ry="3.0" fill="#a4a4a4" stroke="#0a0a0a" stroke-width="1"/><ellipse cx="693.1" cy="234.45" rx="8.712" ry="1.7999999999999998" fill="#9fa0c8" stroke="#0a0a0a" stroke-width="1"/><path d="M684.916 234.75Q693.1 237.8 701.284 234.75" fill="none" stroke="#26262e" stroke-width="1.1"/><path d="M681.748 234.85Q693.1 239.0 704.452 234.85" fill="none" stroke="#ececec" stroke-width="0.7"/>
<ellipse cx="755.6" cy="257.1" rx="13.2" ry="3.0" fill="#a4a4a4" stroke="#0a0a0a" stroke-width="1"/><ellipse cx="755.6" cy="257.8" rx="8.712" ry="1.7999999999999998" fill="#9fa0c8" stroke="#0a0a0a" stroke-width="1"/><path d="M747.416 258.1Q755.6 261.15000000000003 763.784 258.1" fill="none" stroke="#26262e" stroke-width="1.1"/><path d="M744.248 258.20000000000005Q755.6 262.35 766.952 258.20000000000005" fill="none" stroke="#ececec" stroke-width="0.7"/>
<ellipse cx="932.5" cy="171.7" rx="13.2" ry="3.0" fill="#a4a4a4" stroke="#0a0a0a" stroke-width="1"/><ellipse cx="932.5" cy="172.39999999999998" rx="8.712" ry="1.7999999999999998" fill="#9fa0c8" stroke="#0a0a0a" stroke-width="1"/><path d="M924.316 172.7Q932.5 175.75 940.684 172.7" fill="none" stroke="#26262e" stroke-width="1.1"/><path d="M921.148 172.79999999999998Q932.5 176.95 943.852 172.79999999999998" fill="none" stroke="#ececec" stroke-width="0.7"/>
<ellipse cx="995" cy="195" rx="13.2" ry="3.0" fill="#a4a4a4" stroke="#0a0a0a" stroke-width="1"/><ellipse cx="995" cy="195.7" rx="8.712" ry="1.7999999999999998" fill="#9fa0c8" stroke="#0a0a0a" stroke-width="1"/><path d="M986.816 196.0Q995 199.05 1003.184 196.0" fill="none" stroke="#26262e" stroke-width="1.1"/><path d="M983.648 196.1Q995 200.25 1006.352 196.1" fill="none" stroke="#ececec" stroke-width="0.7"/>
<ellipse cx="1056.9" cy="218.1" rx="13.2" ry="3.0" fill="#a4a4a4" stroke="#0a0a0a" stroke-width="1"/><ellipse cx="1056.9" cy="218.79999999999998" rx="8.712" ry="1.7999999999999998" fill="#9fa0c8" stroke="#0a0a0a" stroke-width="1"/><path d="M1048.7160000000001 219.1Q1056.9 222.15 1065.084 219.1" fill="none" stroke="#26262e" stroke-width="1.1"/><path d="M1045.548 219.2Q1056.9 223.35 1068.2520000000002 219.2" fill="none" stroke="#ececec" stroke-width="0.7"/>
<ellipse cx="676.5" cy="204.6" rx="8" ry="2.3" fill="#f4f4f4" stroke="#111" stroke-width="0.7"/>
<ellipse cx="801" cy="250.8" rx="8" ry="2.3" fill="#f4f4f4" stroke="#111" stroke-width="0.7"/>
<ellipse cx="886.5" cy="177.5" rx="8" ry="2.3" fill="#f4f4f4" stroke="#111" stroke-width="0.7"/>
<ellipse cx="1011.5" cy="223.75" rx="8" ry="2.3" fill="#f4f4f4" stroke="#111" stroke-width="0.7"/>
<ellipse cx="616.7" cy="205.4" rx="6" ry="1.7" fill="#174a1d" stroke="#111" stroke-width="0.8"/><path d="M614.2 205.4h5" stroke="#3a9a3c" stroke-width="0.8"/>
<ellipse cx="769.2" cy="262.3" rx="6" ry="1.7" fill="#174a1d" stroke="#111" stroke-width="0.8"/><path d="M766.7 262.3h5" stroke="#3a9a3c" stroke-width="0.8"/>
<ellipse cx="918.75" cy="166.5" rx="6" ry="1.7" fill="#174a1d" stroke="#111" stroke-width="0.8"/><path d="M916.25 166.5h5" stroke="#3a9a3c" stroke-width="0.8"/>
<ellipse cx="1071" cy="223.3" rx="6" ry="1.7" fill="#174a1d" stroke="#111" stroke-width="0.8"/><path d="M1068.5 223.3h5" stroke="#3a9a3c" stroke-width="0.8"/>
<defs><linearGradient id="gring" x1="0" x2="1"><stop offset="0" stop-color="#a9aad2"/><stop offset="0.45" stop-color="#9495bd"/><stop offset="1" stop-color="#3c3c54"/></linearGradient><linearGradient id="gringi" x1="0" x2="1"><stop offset="0" stop-color="#50506a"/><stop offset="0.6" stop-color="#a6a7cf"/><stop offset="1" stop-color="#9c9dc5"/></linearGradient></defs>
<path d="M790.7 204.6v8.4A53 11.6 0 0 0 896.7 213.0v-8.4Z" fill="url(#gring)" stroke="#0c0c0c" stroke-width="0.9"/>
<ellipse cx="843.7" cy="204.6" rx="53" ry="11.6" fill="#9c9dc5" stroke="#0c0c0c" stroke-width="0.9"/>
<ellipse cx="843.7" cy="204.9" rx="50.6" ry="10.6" fill="none" stroke="#6e6f92" stroke-width="0.6"/>
<ellipse cx="843.4000000000001" cy="203.2" rx="31.2" ry="7.6" fill="url(#gringi)" stroke="#0c0c0c" stroke-width="0.9"/>
<ellipse cx="804.7" cy="209.5" rx="3.8" ry="1.3" fill="#16161e"/>
<ellipse cx="882.1" cy="199.2" rx="3.8" ry="1.3" fill="#16161e"/>
<ellipse cx="864.3000000000001" cy="210.7" rx="3.8" ry="1.3" fill="#16161e"/>
<ellipse cx="823.0" cy="195.2" rx="3.8" ry="1.3" fill="#16161e"/>
<ellipse cx="954.8" cy="273.3" rx="5.4" ry="6" fill="#f8f8f8" stroke="#111" stroke-width="0.8"/><path d="M951 270A5 5.6 0 0 0 951.5 277.5" fill="none" stroke="#999" stroke-width="1.2"/>
<g transform="matrix(-1,-0.3779,0.018,1,769.80,281.11)"><ellipse cx="142.8" cy="63.3" rx="8.3" ry="16.6" fill="url(#gholeA)" stroke="#111" stroke-width="0.9"/><ellipse cx="143.7" cy="63.9" rx="6.700000000000001" ry="14.600000000000001" fill="none" stroke="#111" stroke-width="0.5"/><ellipse cx="138.4" cy="63.8" rx="3.3" ry="6.6" fill="#185a22" stroke="#05180a" stroke-width="0.9"/><ellipse cx="137.9" cy="63.8" rx="1.5" ry="3.8" fill="#2f8a3a"/><text transform="translate(145.8,86.4) scale(-1,1)" font-size="6" font-weight="bold" font-family="Liberation Sans,sans-serif" fill="#000" stroke="#000" stroke-width="0.3" textLength="6.9" lengthAdjust="spacingAndGlyphs">IN1</text></g>
<g transform="matrix(-1,-0.3779,0.018,1,769.80,281.11)"><ellipse cx="120.5" cy="63.2" rx="8.3" ry="16.6" fill="url(#gholeA)" stroke="#111" stroke-width="0.9"/><ellipse cx="121.4" cy="63.8" rx="6.700000000000001" ry="14.600000000000001" fill="none" stroke="#111" stroke-width="0.5"/><ellipse cx="116.1" cy="63.7" rx="3.3" ry="6.6" fill="#185a22" stroke="#05180a" stroke-width="0.9"/><ellipse cx="115.6" cy="63.7" rx="1.5" ry="3.8" fill="#2f8a3a"/><text transform="translate(123.5,86.3) scale(-1,1)" font-size="6" font-weight="bold" font-family="Liberation Sans,sans-serif" fill="#000" stroke="#000" stroke-width="0.3" textLength="6.9" lengthAdjust="spacingAndGlyphs">IN2</text></g>
<g transform="matrix(-1,-0.3779,0.018,1,769.80,281.11)"><ellipse cx="96.5" cy="63.5" rx="8.3" ry="16.6" fill="url(#gholeA)" stroke="#111" stroke-width="0.9"/><ellipse cx="97.4" cy="64.1" rx="6.700000000000001" ry="14.600000000000001" fill="none" stroke="#111" stroke-width="0.5"/><ellipse cx="92.1" cy="64.0" rx="3.3" ry="6.6" fill="#185a22" stroke="#05180a" stroke-width="0.9"/><ellipse cx="91.6" cy="64.0" rx="1.5" ry="3.8" fill="#2f8a3a"/><text transform="translate(99.5,86.6) scale(-1,1)" font-size="6" font-weight="bold" font-family="Liberation Sans,sans-serif" fill="#000" stroke="#000" stroke-width="0.3" textLength="7.7" lengthAdjust="spacingAndGlyphs">OUT2</text></g>
<g transform="matrix(-1,-0.3779,0.018,1,769.80,281.11)"><ellipse cx="74.1" cy="64.4" rx="8.3" ry="16.6" fill="url(#gholeA)" stroke="#111" stroke-width="0.9"/><ellipse cx="75.0" cy="65.0" rx="6.700000000000001" ry="14.600000000000001" fill="none" stroke="#111" stroke-width="0.5"/><ellipse cx="69.7" cy="64.9" rx="3.3" ry="6.6" fill="#185a22" stroke="#05180a" stroke-width="0.9"/><ellipse cx="69.2" cy="64.9" rx="1.5" ry="3.8" fill="#2f8a3a"/><text transform="translate(77.1,87.5) scale(-1,1)" font-size="6" font-weight="bold" font-family="Liberation Sans,sans-serif" fill="#000" stroke="#000" stroke-width="0.3" textLength="7.7" lengthAdjust="spacingAndGlyphs">OUT1</text></g>
<g transform="matrix(-1,-0.3779,0.018,1,769.80,281.11)"><ellipse cx="121.2" cy="186.4" rx="8.3" ry="16.6" fill="url(#ghole)" stroke="#111" stroke-width="0.9"/><ellipse cx="122.1" cy="187.0" rx="6.700000000000001" ry="14.600000000000001" fill="none" stroke="#111" stroke-width="0.5"/><ellipse cx="116.8" cy="186.9" rx="3.3" ry="6.6" fill="#185a22" stroke="#05180a" stroke-width="0.9"/><ellipse cx="116.3" cy="186.9" rx="1.5" ry="3.8" fill="#2f8a3a"/><text transform="translate(124.2,209.5) scale(-1,1)" font-size="6" font-weight="bold" font-family="Liberation Sans,sans-serif" fill="#000" stroke="#000" stroke-width="0.3" textLength="6.9" lengthAdjust="spacingAndGlyphs">IN3</text></g>
<g transform="matrix(-1,-0.3779,0.018,1,769.80,281.11)"><ellipse cx="97.1" cy="186.1" rx="8.3" ry="16.6" fill="url(#ghole)" stroke="#111" stroke-width="0.9"/><ellipse cx="98.0" cy="186.7" rx="6.700000000000001" ry="14.600000000000001" fill="none" stroke="#111" stroke-width="0.5"/><ellipse cx="92.7" cy="186.6" rx="3.3" ry="6.6" fill="#185a22" stroke="#05180a" stroke-width="0.9"/><ellipse cx="92.2" cy="186.6" rx="1.5" ry="3.8" fill="#2f8a3a"/><text transform="translate(100.1,209.2) scale(-1,1)" font-size="6" font-weight="bold" font-family="Liberation Sans,sans-serif" fill="#000" stroke="#000" stroke-width="0.3" textLength="7.7" lengthAdjust="spacingAndGlyphs">OUT3</text></g>
<g transform="matrix(-1,-0.3779,0.018,1,769.80,281.11)"><ellipse cx="74.6" cy="170.8" rx="4.8" ry="9.2" fill="url(#ghole)" stroke="#111" stroke-width="0.9"/><ellipse cx="75.5" cy="171.4" rx="3.1999999999999997" ry="7.199999999999999" fill="none" stroke="#111" stroke-width="0.5"/></g>
<g transform="matrix(-1,-0.3779,0.018,1,769.80,281.11)"><ellipse cx="143.8" cy="360.2" rx="8" ry="16.5" fill="url(#ghole)" stroke="#111" stroke-width="0.9"/><ellipse cx="144.7" cy="360.8" rx="6.4" ry="14.5" fill="none" stroke="#111" stroke-width="0.5"/><ellipse cx="139.4" cy="360.7" rx="3.3" ry="6.6" fill="#185a22" stroke="#05180a" stroke-width="0.9"/><ellipse cx="138.9" cy="360.7" rx="1.5" ry="3.8" fill="#2f8a3a"/><text transform="translate(146.8,383.2) scale(-1,1)" font-size="6" font-weight="bold" font-family="Liberation Sans,sans-serif" fill="#000" stroke="#000" stroke-width="0.3" textLength="6.9" lengthAdjust="spacingAndGlyphs">IN4</text></g>
<g transform="matrix(-1,-0.3779,0.018,1,769.80,281.11)"><ellipse cx="74.8" cy="360.6" rx="8" ry="16.5" fill="url(#ghole)" stroke="#111" stroke-width="0.9"/><ellipse cx="75.7" cy="361.2" rx="6.4" ry="14.5" fill="none" stroke="#111" stroke-width="0.5"/><ellipse cx="70.4" cy="361.1" rx="3.3" ry="6.6" fill="#185a22" stroke="#05180a" stroke-width="0.9"/><ellipse cx="69.9" cy="361.1" rx="1.5" ry="3.8" fill="#2f8a3a"/><text transform="translate(77.8,383.6) scale(-1,1)" font-size="6" font-weight="bold" font-family="Liberation Sans,sans-serif" fill="#000" stroke="#000" stroke-width="0.3" textLength="7.7" lengthAdjust="spacingAndGlyphs">OUT4</text></g>
<g transform="matrix(-1,-0.3779,0.018,1,769.80,281.11)"><rect x="89.8" y="91" width="37.0" height="68.5" rx="4" fill="#e5e4ab" stroke="#111" stroke-width="0.9"/><path d="M89.8 121.5H102.13333333333333V132.5H114.46666666666667V121.5H126.8" fill="none" stroke="#111" stroke-width="1.3"/><ellipse cx="97.2" cy="105.0" rx="4.6" ry="6.9" fill="#174f1e" stroke="#041206" stroke-width="1.1"/><ellipse cx="97.2" cy="105.0" rx="3.0" ry="4.6" fill="#2a7a34" stroke="#072a0c" stroke-width="0.8"/><path d="M95.2 105h4M97.2 102.4v5.2M95.60000000000001 103.2l3.2 3.6M98.8 103.2l-3.2 3.6" stroke="#3fb04c" stroke-width="0.7"/><ellipse cx="119.4" cy="105.0" rx="4.6" ry="6.9" fill="#174f1e" stroke="#041206" stroke-width="1.1"/><ellipse cx="119.4" cy="105.0" rx="3.0" ry="4.6" fill="#2a7a34" stroke="#072a0c" stroke-width="0.8"/><path d="M117.39999999999999 105h4M119.39999999999999 102.4v5.2M117.8 103.2l3.2 3.6M120.99999999999999 103.2l-3.2 3.6" stroke="#3fb04c" stroke-width="0.7"/><ellipse cx="97.2" cy="146.5" rx="4.6" ry="6.9" fill="#174f1e" stroke="#041206" stroke-width="1.1"/><ellipse cx="97.2" cy="146.5" rx="3.0" ry="4.6" fill="#2a7a34" stroke="#072a0c" stroke-width="0.8"/><path d="M95.2 146.5h4M97.2 143.9v5.2M95.60000000000001 144.7l3.2 3.6M98.8 144.7l-3.2 3.6" stroke="#3fb04c" stroke-width="0.7"/><ellipse cx="119.4" cy="146.5" rx="4.6" ry="6.9" fill="#174f1e" stroke="#041206" stroke-width="1.1"/><ellipse cx="119.4" cy="146.5" rx="3.0" ry="4.6" fill="#2a7a34" stroke="#072a0c" stroke-width="0.8"/><path d="M117.39999999999999 146.5h4M119.39999999999999 143.9v5.2M117.8 144.7l3.2 3.6M120.99999999999999 144.7l-3.2 3.6" stroke="#3fb04c" stroke-width="0.7"/></g>
<g transform="matrix(-1,-0.3779,0.018,1,769.80,281.11)"><rect x="164.6" y="105.1" width="12" height="44" rx="4.5" fill="#c80f0f" stroke="#3a0000" stroke-width="0.9"/><rect x="162.6" y="106.1" width="3.5" height="43" rx="1.5" fill="#8e0a0a" stroke="#3a0000" stroke-width="0.6"/></g>
<ellipse cx="596.5" cy="333" rx="4.6" ry="4.2" fill="#1f6a2a" stroke="#06200a" stroke-width="0.9"/><ellipse cx="594.3" cy="333" rx="2" ry="3.4" fill="#2f8a3a" stroke="#06200a" stroke-width="0.6"/>
<ellipse cx="597" cy="356.5" rx="4.6" ry="4.2" fill="#1f6a2a" stroke="#06200a" stroke-width="0.9"/><ellipse cx="594.8" cy="356.5" rx="2" ry="3.4" fill="#2f8a3a" stroke="#06200a" stroke-width="0.6"/>
<ellipse cx="597" cy="377" rx="4.6" ry="4.2" fill="#1f6a2a" stroke="#06200a" stroke-width="0.9"/><ellipse cx="594.8" cy="377" rx="2" ry="3.4" fill="#2f8a3a" stroke="#06200a" stroke-width="0.6"/>
<rect x="600" y="374" width="4" height="6" fill="#1f6a2a" stroke="#06200a" stroke-width="0.6"/>
<g transform="matrix(1,-0.13235,0.018,1,748.00,284.00)"><ellipse cx="206.6" cy="69.1" rx="11.2" ry="12.8" fill="#b9bae2" stroke="#111" stroke-width="0.9"/><path d="M200.4 59.5A11.2 12.8 0 0 0 204.3 81.0" fill="none" stroke="#5a5b78" stroke-width="1.6" opacity="0.8"/></g>
<g transform="matrix(1,-0.13235,0.018,1,748.00,284.00)"><ellipse cx="206.3" cy="181.3" rx="11.2" ry="12.8" fill="#f8f8f8" stroke="#111" stroke-width="0.9"/><path d="M200.2 171.7A11.2 12.8 0 0 0 204.1 193.2" fill="none" stroke="#777" stroke-width="1.6" opacity="0.8"/></g>
<g transform="matrix(1,-0.13235,0.018,1,748.00,284.00)"><ellipse cx="206.0" cy="251.3" rx="11.2" ry="12.8" fill="#f8f8f8" stroke="#111" stroke-width="0.9"/><path d="M199.8 241.7A11.2 12.8 0 0 0 203.7 263.2" fill="none" stroke="#777" stroke-width="1.6" opacity="0.8"/></g>
<g transform="matrix(1,-0.13235,0.018,1,748.00,284.00)"><rect x="171.5" y="91.5" width="69.0" height="68.80000000000001" rx="4" fill="#aba97f" stroke="#111" stroke-width="0.9"/><path d="M171.5 122H194.5V133H217.5V122H240.5" fill="none" stroke="#111" stroke-width="1.3"/><ellipse cx="185.3" cy="105.5" rx="6.2" ry="6.9" fill="#174f1e" stroke="#041206" stroke-width="1.1"/><ellipse cx="185.3" cy="105.5" rx="4.1" ry="4.6" fill="#2a7a34" stroke="#072a0c" stroke-width="0.8"/><path d="M183.3 105.5h4M185.3 102.9v5.2M183.70000000000002 103.7l3.2 3.6M186.9 103.7l-3.2 3.6" stroke="#3fb04c" stroke-width="0.7"/><ellipse cx="226.7" cy="105.5" rx="6.2" ry="6.9" fill="#174f1e" stroke="#041206" stroke-width="1.1"/><ellipse cx="226.7" cy="105.5" rx="4.1" ry="4.6" fill="#2a7a34" stroke="#072a0c" stroke-width="0.8"/><path d="M224.7 105.5h4M226.7 102.9v5.2M225.1 103.7l3.2 3.6M228.29999999999998 103.7l-3.2 3.6" stroke="#3fb04c" stroke-width="0.7"/><ellipse cx="185.3" cy="147.3" rx="6.2" ry="6.9" fill="#174f1e" stroke="#041206" stroke-width="1.1"/><ellipse cx="185.3" cy="147.3" rx="4.1" ry="4.6" fill="#2a7a34" stroke="#072a0c" stroke-width="0.8"/><path d="M183.3 147.3h4M185.3 144.70000000000002v5.2M183.70000000000002 145.5l3.2 3.6M186.9 145.5l-3.2 3.6" stroke="#3fb04c" stroke-width="0.7"/><ellipse cx="226.7" cy="147.3" rx="6.2" ry="6.9" fill="#174f1e" stroke="#041206" stroke-width="1.1"/><ellipse cx="226.7" cy="147.3" rx="4.1" ry="4.6" fill="#2a7a34" stroke="#072a0c" stroke-width="0.8"/><path d="M224.7 147.3h4M226.7 144.70000000000002v5.2M225.1 145.5l3.2 3.6M228.29999999999998 145.5l-3.2 3.6" stroke="#3fb04c" stroke-width="0.7"/></g>
<g transform="matrix(1,-0.13235,0.018,1,748.00,284.00)"><text x="280.0" y="164.1" font-size="21" font-family="Liberation Serif,serif" fill="#111" textLength="29" lengthAdjust="spacingAndGlyphs">TOP</text></g>
<g transform="matrix(1,-0.13235,0.018,1,748.00,284.00)"><text x="267.7" y="184.9" font-size="11.5" font-weight="bold" font-family="Liberation Serif,serif" fill="#111" textLength="53" lengthAdjust="spacingAndGlyphs">HM1408609</text></g>
<circle cx="1042" cy="310" r="4.2" fill="#c8881a" stroke="#3a2a00" stroke-width="0.8"/><circle cx="1042" cy="310" r="2.4" fill="#2f7a34" stroke="#0a2a0e" stroke-width="0.6"/>
<g transform="matrix(1,-0.13235,0.018,1,748.00,284.00)"><text x="284.0" y="53.1" font-size="6" font-weight="bold" font-family="Liberation Sans,sans-serif" fill="#111">M8*8PT</text></g>
<polygon points="742.2,394.4 773.5,406.6 773.5,413.5 743.7,401.3" fill="#0a7a7a" stroke="#080808" stroke-width="1.0" stroke-linejoin="round" />
<polygon points="773.5,406.6 833.8,399.0 833.8,405.9 773.5,413.5" fill="#075e5e" stroke="#080808" stroke-width="1.0" stroke-linejoin="round" />
<polygon points="742.2,394.4 752.0,392.5 775.5,401.0 833.8,399.0 773.5,406.6" fill="#1a8e8e" stroke="#080808" stroke-width="0.5" stroke-linejoin="round" />
<polygon points="553.7,323.7 572.7,325.2 574.3,329.0 587.3,335.9 585.7,343.5 554.4,331.3" fill="#0a7a7a" stroke="#080808" stroke-width="1.0" stroke-linejoin="round" />
<polygon points="1079.8,368.5 1102.7,363.3 1110.0,357.1 1130.8,354.6 1139.2,359.2 1139.2,366.5 1080.8,374.8" fill="#0a7a7a" stroke="#080808" stroke-width="1.0" stroke-linejoin="round" />
<polygon points="1102.7,363.3 1110.0,357.1 1130.8,354.6 1139.2,359.2" fill="#1a8e8e" stroke="#080808" stroke-width="0.5" stroke-linejoin="round" />
<polygon points="556.7,420.1 569.7,418.6 573.7,426.6 571.7,429.1 556.7,423.5" fill="#cfcfcf" stroke="#080808" stroke-width="0.5" stroke-linejoin="round" />
<polygon points="759.7,492.4 764.7,490.1 773.7,495.4 778.3,497.0 805.7,493.4 801.7,496.6 778.3,500.2 773.7,499.6" fill="#d4d4d4" stroke="#080808" stroke-width="0.5" stroke-linejoin="round" />
<polygon points="1105.1,456.6 1113.1,449.4 1119.1,448.6 1111.1,455.8" fill="#8e8e8e" stroke="#080808" stroke-width="0.5" stroke-linejoin="round" />
<polygon points="1113.1,449.4 1138.1,446.1 1138.1,453.2 1111.1,455.8 1119.1,448.6" fill="#ececec" stroke="#080808" stroke-width="0.4" stroke-linejoin="round" />
<polygon points="558.0,491.1 571.0,489.6 575.0,497.6 573.0,500.1 558.0,494.5" fill="#cfcfcf" stroke="#080808" stroke-width="0.5" stroke-linejoin="round" />
<polygon points="761.0,563.4 766.0,561.1 775.0,566.4 779.6,568.0 807.0,564.4 803.0,567.6 779.6,571.2 775.0,570.6" fill="#d4d4d4" stroke="#080808" stroke-width="0.5" stroke-linejoin="round" />
<polygon points="1106.4,527.6 1114.4,520.4 1120.4,519.6 1112.4,526.8" fill="#8e8e8e" stroke="#080808" stroke-width="0.5" stroke-linejoin="round" />
<polygon points="1114.4,520.4 1139.4,517.1 1139.4,524.2 1112.4,526.8 1120.4,519.6" fill="#ececec" stroke="#080808" stroke-width="0.4" stroke-linejoin="round" />
<polygon points="558.9,544.1 571.9,542.6 575.9,550.6 573.9,553.1 558.9,547.5" fill="#cfcfcf" stroke="#080808" stroke-width="0.5" stroke-linejoin="round" />
<polygon points="761.9,616.4 766.9,614.1 775.9,619.4 780.5,621.0 807.9,617.4 803.9,620.6 780.5,624.2 775.9,623.6" fill="#d4d4d4" stroke="#080808" stroke-width="0.5" stroke-linejoin="round" />
<polygon points="1107.3,580.6 1115.3,573.4 1121.3,572.6 1113.3,579.8" fill="#8e8e8e" stroke="#080808" stroke-width="0.5" stroke-linejoin="round" />
<polygon points="1115.3,573.4 1140.3,570.1 1140.3,577.2 1113.3,579.8 1121.3,572.6" fill="#ececec" stroke="#080808" stroke-width="0.4" stroke-linejoin="round" />
<polygon points="559.8,594.1 572.8,592.6 576.8,600.6 574.8,603.1 559.8,597.5" fill="#cfcfcf" stroke="#080808" stroke-width="0.5" stroke-linejoin="round" />
<polygon points="762.8,666.4 767.8,664.1 776.8,669.4 781.4,671.0 808.8,667.4 804.8,670.6 781.4,674.2 776.8,673.6" fill="#d4d4d4" stroke="#080808" stroke-width="0.5" stroke-linejoin="round" />
<polygon points="1108.2,630.6 1116.2,623.4 1122.2,622.6 1114.2,629.8" fill="#8e8e8e" stroke="#080808" stroke-width="0.5" stroke-linejoin="round" />
<polygon points="1116.2,623.4 1141.2,620.1 1141.2,627.2 1114.2,629.8 1122.2,622.6" fill="#ececec" stroke="#080808" stroke-width="0.4" stroke-linejoin="round" />
<polygon points="764.5,759.9 769.5,757.6 778.5,762.9 783.1,764.5 810.5,760.9 806.5,764.1 783.1,767.7 778.5,767.1" fill="#e4e4e4" stroke="#080808" stroke-width="0.5" stroke-linejoin="round" />
<polygon points="775.0,315.1 800.4,308.1 806.4,310.6 804.4,313.6 776.4,319.6" fill="#a9aad0" stroke="#080808" stroke-width="0.5" stroke-linejoin="round" />
<polygon points="1104.9,277.9 1110.9,271.9 1122.9,270.3 1116.9,276.3" fill="#5c5d74" stroke="#080808" stroke-width="0.5" stroke-linejoin="round" />
<polygon points="757.9,392.1 762.9,390.1 771.9,396.5 771.9,400.1 759.9,395.6" fill="#b9bade" stroke="#080808" stroke-width="0.5" stroke-linejoin="round" />
<polygon points="776.5,399.3 801.9,394.5 806.9,391.1 785.9,393.7" fill="#b9bade" stroke="#080808" stroke-width="0.5" stroke-linejoin="round" />
<defs><linearGradient id="gpil" x1="0" x2="1"><stop offset="0" stop-color="#b8b8b8"/><stop offset="0.45" stop-color="#9a9a9a"/><stop offset="1" stop-color="#3c3c3c"/></linearGradient><linearGradient id="grod" x1="0" y1="0" x2="0.36" y2="1"><stop offset="0" stop-color="#b4b3a2"/><stop offset="0.55" stop-color="#a9a897"/><stop offset="1" stop-color="#7f7e70"/></linearGradient><linearGradient id="gbody" gradientUnits="userSpaceOnUse" x1="1160" y1="622" x2="1138" y2="690"><stop offset="0" stop-color="#2a7f30"/><stop offset="0.3" stop-color="#3a9a40"/><stop offset="0.62" stop-color="#358f3b"/><stop offset="1" stop-color="#174a1c"/></linearGradient><linearGradient id="gwm" x1="0" y1="0" x2="0" y2="1"><stop offset="0" stop-color="#f6a13a"/><stop offset="1" stop-color="#ef7a1e"/></linearGradient></defs>
<polygon points="834.0,607.4 1037.0,580.5 1037.3,598.5 834.3,625.4" fill="#9e9e9e" stroke="#080808" stroke-width="0" stroke-linejoin="round" />
<polygon points="839.6,660.0 1081.0,628.0 1081.0,731.0 839.6,762.0" fill="#7f837e" stroke="#080808" stroke-width="0.4" stroke-linejoin="round" />
<polygon points="839.6,757.0 1081.0,727.0 1086.0,731.5 842.0,765.5" fill="#e6e6e6" stroke="#080808" stroke-width="0.5" stroke-linejoin="round" />
<polyline points="841.0,761.0 1084.0,729.5" fill="none" stroke="#888" stroke-width="0.6" />
<path d="M881 640V676a10 3.4 0 0 0 15 2V640Z" fill="url(#gpil)" stroke="#111" stroke-width="0.5"/>
<ellipse cx="960.5" cy="665" rx="28.5" ry="5.2" fill="#8c8c8c" stroke="#111" stroke-width="0.5"/><path d="M934 630V663.5a27 5 0 0 0 53.5 0V630Z" fill="url(#gpil)" stroke="#111" stroke-width="0.5"/>
<polygon points="839.6,636.0 1081.0,604.0 1081.0,625.5 839.6,657.5" fill="#9e9e9e" stroke="#080808" stroke-width="0" stroke-linejoin="round" />
<polyline points="839.6,657.5 1081.0,625.5" fill="none" stroke="#222" stroke-width="0.7" />
<path d="M929.3 677.2v5.6a15.5 4.2 0 0 0 31 0v-5.6Z" fill="#067070" stroke="#111" stroke-width="0.7"/><ellipse cx="944.8" cy="677.2" rx="15.5" ry="4.2" fill="#0f8888" stroke="#111" stroke-width="0.7"/><ellipse cx="944.8" cy="676.6" rx="8" ry="2" fill="#0a4a4a" stroke="#111" stroke-width="0.5"/><path d="M940.5 676.6h3M946 676.6h3" stroke="#7fd04a" stroke-width="0.9"/><rect x="941.5" y="669.5" width="6" height="4" fill="#111"/>
<polygon points="846.0,705.6 1077.9,680.8 1077.9,696.9 846.0,724.6" fill="#6a6f69" stroke="#080808" stroke-width="1.0" stroke-linejoin="round" />
<polygon points="846.0,727.5 1077.9,698.3 1077.9,726.0 846.0,755.2" fill="#59562f" stroke="#080808" stroke-width="1.0" stroke-linejoin="round" />
<polygon points="846.0,724.6 1077.9,696.9 1077.9,698.3 846.0,727.5" fill="#3a3a30" stroke="#080808" stroke-width="0.3" stroke-linejoin="round" />
<polygon points="841.5,707.0 846.0,705.6 846.0,724.6 841.5,726.0" fill="#a9aea8" stroke="#080808" stroke-width="0.5" stroke-linejoin="round" />
<polygon points="841.5,729.0 846.0,727.5 846.0,755.2 841.5,757.0" fill="#8a8650" stroke="#080808" stroke-width="0.5" stroke-linejoin="round" />
<ellipse cx="962.3" cy="700.1" rx="4.2" ry="4.6" fill="#b9c2bb" stroke="#111" stroke-width="0.8"/>
<ellipse cx="962.7" cy="727.9" rx="4.2" ry="4.6" fill="#a89f4a" stroke="#111" stroke-width="0.8"/>
<polygon points="1078.5,679.0 1085.0,678.0 1086.0,730.0 1079.5,731.0" fill="#f4f4f4" stroke="#080808" stroke-width="0.5" stroke-linejoin="round" />
<ellipse cx="810.6" cy="716.5" rx="5.6" ry="6.2" fill="#fafafa" stroke="#111" stroke-width="0.8"/><path d="M807 712.5a5.6 6.2 0 0 0 0.6 8.6" fill="none" stroke="#888" stroke-width="1.3"/>
<ellipse cx="963.7" cy="765.9" rx="5.8" ry="6.4" fill="#fafafa" stroke="#111" stroke-width="0.8"/><path d="M960 761.8a5.8 6.4 0 0 0 0.6 8.8" fill="none" stroke="#888" stroke-width="1.3"/>
<ellipse cx="1111.5" cy="680.5" rx="5.6" ry="6.2" fill="#fafafa" stroke="#111" stroke-width="0.8"/>
<path d="M842 687v6.5a20.5 6 0 0 0 41 0v-6.5Z" fill="#4a0a98" stroke="#111" stroke-width="0.6"/><ellipse cx="862.5" cy="687" rx="20.5" ry="6" fill="#6a10d0" stroke="#111" stroke-width="0.6"/>
<path d="M842 678v6.5a20.5 6 0 0 0 41 0v-6.5Z" fill="#4a0a98" stroke="#111" stroke-width="0.6"/><ellipse cx="862.5" cy="678" rx="20.5" ry="6" fill="#7a18ea" stroke="#111" stroke-width="0.6"/>
<path d="M842 669v6.5a20.5 6 0 0 0 41 0v-6.5Z" fill="#4a0a98" stroke="#111" stroke-width="0.6"/><ellipse cx="862.5" cy="669" rx="20.5" ry="6" fill="#6a10d0" stroke="#111" stroke-width="0.6"/>
<path d="M842 660.5v6.5a20.5 6 0 0 0 41 0v-6.5Z" fill="#4a0a98" stroke="#111" stroke-width="0.6"/><ellipse cx="862.5" cy="660.5" rx="20.5" ry="6" fill="#7a18ea" stroke="#111" stroke-width="0.6"/>
<polygon points="846.0,676.5 866.0,675.0 866.0,678.0 846.0,679.5" fill="#f0e800" stroke="#080808" stroke-width="0.4" stroke-linejoin="round" />
<polygon points="776.8,574.4 816.5,569.0 827.0,572.8 803.5,582.0" fill="#a8009e" stroke="#080808" stroke-width="1.0" stroke-linejoin="round" />
<polygon points="776.8,574.4 803.5,582.0 803.5,675.0 779.0,666.7" fill="#e800dc" stroke="#080808" stroke-width="1.0" stroke-linejoin="round" />
<polygon points="803.5,582.0 827.0,572.8 827.0,600.0 803.5,610.0" fill="#c000b6" stroke="#080808" stroke-width="1.0" stroke-linejoin="round" />
<path d="M786.8 597.0q1.8 -2.2 3.2 0.2q1.2 2 0.2 3.4M791.6 598.2q1.8 -2.2 3.2 0.2q1.2 2 0.2 3.4" fill="none" stroke="#4a0048" stroke-width="1.3"/>
<path d="M786.8 602.6q1.8 -2.2 3.2 0.2q1.2 2 0.2 3.4M791.6 603.8q1.8 -2.2 3.2 0.2q1.2 2 0.2 3.4" fill="none" stroke="#4a0048" stroke-width="1.3"/>
<path d="M786.8 608.2q1.8 -2.2 3.2 0.2q1.2 2 0.2 3.4M791.6 609.4q1.8 -2.2 3.2 0.2q1.2 2 0.2 3.4" fill="none" stroke="#4a0048" stroke-width="1.3"/>
<path d="M786.8 613.8q1.8 -2.2 3.2 0.2q1.2 2 0.2 3.4M791.6 615.0q1.8 -2.2 3.2 0.2q1.2 2 0.2 3.4" fill="none" stroke="#4a0048" stroke-width="1.3"/>
<path d="M786.8 619.4q1.8 -2.2 3.2 0.2q1.2 2 0.2 3.4M791.6 620.6q1.8 -2.2 3.2 0.2q1.2 2 0.2 3.4" fill="none" stroke="#4a0048" stroke-width="1.3"/>
<path d="M786.8 625.0q1.8 -2.2 3.2 0.2q1.2 2 0.2 3.4M791.6 626.2q1.8 -2.2 3.2 0.2q1.2 2 0.2 3.4" fill="none" stroke="#4a0048" stroke-width="1.3"/>
<path d="M786.8 630.6q1.8 -2.2 3.2 0.2q1.2 2 0.2 3.4M791.6 631.8q1.8 -2.2 3.2 0.2q1.2 2 0.2 3.4" fill="none" stroke="#4a0048" stroke-width="1.3"/>
<path d="M786.8 636.2q1.8 -2.2 3.2 0.2q1.2 2 0.2 3.4M791.6 637.4q1.8 -2.2 3.2 0.2q1.2 2 0.2 3.4" fill="none" stroke="#4a0048" stroke-width="1.3"/>
<path d="M786.8 641.8q1.8 -2.2 3.2 0.2q1.2 2 0.2 3.4M791.6 643.0q1.8 -2.2 3.2 0.2q1.2 2 0.2 3.4" fill="none" stroke="#4a0048" stroke-width="1.3"/>
<path d="M786.8 647.4q1.8 -2.2 3.2 0.2q1.2 2 0.2 3.4M791.6 648.6q1.8 -2.2 3.2 0.2q1.2 2 0.2 3.4" fill="none" stroke="#4a0048" stroke-width="1.3"/>
<path d="M786.8 653.0q1.8 -2.2 3.2 0.2q1.2 2 0.2 3.4M791.6 654.2q1.8 -2.2 3.2 0.2q1.2 2 0.2 3.4" fill="none" stroke="#4a0048" stroke-width="1.3"/>
<circle cx="800.5" cy="576.5" r="3.2" fill="#1a9aa8" stroke="#043a40" stroke-width="0.8"/><circle cx="800.5" cy="576.5" r="1.4" fill="#0a5a66"/>
<polygon points="857.0,598.0 872.0,603.0 872.0,615.0 857.0,611.0" fill="#065c5c" stroke="#080808" stroke-width="1.0" stroke-linejoin="round" />
<polygon points="872.0,600.0 881.5,599.6 881.5,615.4 872.0,615.0" fill="#007676" stroke="#080808" stroke-width="1.0" stroke-linejoin="round" />
<polygon points="881.5,599.6 892.5,603.9 892.5,619.2 881.5,615.4" fill="#0a8a8a" stroke="#080808" stroke-width="1.0" stroke-linejoin="round" />
<polygon points="892.5,603.9 1029.0,654.5 1029.0,679.5 892.5,628.7" fill="#007676" stroke="#080808" stroke-width="1.0" stroke-linejoin="round" />
<polygon points="927.3,540.6 1018.2,575.0 1018.2,592.0 927.3,557.6" fill="#85867a" stroke="#080808" stroke-width="1.0" stroke-linejoin="round" />
<polygon points="927.3,540.6 944.1,538.0 1034.2,571.1 1018.2,575.0" fill="#8f9084" stroke="#080808" stroke-width="1.0" stroke-linejoin="round" />
<polygon points="1018.2,575.0 1034.2,571.1 1071.0,585.5 1054.0,589.5" fill="#8f9084" stroke="#080808" stroke-width="1.0" stroke-linejoin="round" />
<polygon points="1018.2,575.0 1054.0,589.5 1054.0,600.0 1018.2,592.0" fill="#85867a" stroke="#080808" stroke-width="1.0" stroke-linejoin="round" />
<ellipse cx="948" cy="542.8" rx="6.5" ry="1.7" fill="#55554c" stroke="#111" stroke-width="0.8"/>
<ellipse cx="994.5" cy="557" rx="2.8" ry="0.7" fill="#111" stroke="#111" stroke-width="0.8"/>
<ellipse cx="1018.3" cy="565.8" rx="3" ry="0.8" fill="#111" stroke="#111" stroke-width="0.8"/>
<ellipse cx="1022" cy="567.5" rx="7" ry="1.8" fill="#55554c" stroke="#111" stroke-width="0.8"/>
<ellipse cx="1043" cy="576" rx="6.5" ry="1.7" fill="#55554c" stroke="#111" stroke-width="0.8"/>
<ellipse cx="1058" cy="583" rx="4" ry="1.0" fill="#111" stroke="#111" stroke-width="0.8"/>
<polygon points="893.7,554.4 910.5,551.3 1003.0,586.0 993.0,590.0" fill="#2f6f2f" stroke="#080808" stroke-width="0.6" stroke-linejoin="round" />
<polyline points="899.0,553.4 998.0,590.0" fill="none" stroke="#4f9a4a" stroke-width="1.0" />
<polyline points="904.5,552.4 1001.0,588.3" fill="none" stroke="#3f8a3c" stroke-width="0.9" />
<polyline points="896.0,553.9 995.0,590.5" fill="none" stroke="#1d4a1f" stroke-width="0.6" />
<polygon points="845.7,562.9 869.1,559.1 935.9,584.8 935.9,619.7 879.6,598.7 868.2,593.4 867.2,580.1 855.8,574.4 845.7,571.5" fill="#85867a" stroke="#080808" stroke-width="1.0" stroke-linejoin="round" />
<polygon points="935.9,584.8 978.5,600.6 1029.0,619.5 1029.0,654.5 935.9,619.7" fill="#85867a" stroke="#080808" stroke-width="1.0" stroke-linejoin="round" />
<polygon points="869.1,559.1 892.0,554.3 993.0,590.0 1029.0,603.0 1029.0,619.5 978.5,600.6 935.9,584.8" fill="#8f9084" stroke="#080808" stroke-width="1.0" stroke-linejoin="round" />
<polyline points="935.9,584.8 959.5,581.2" fill="none" stroke="#111" stroke-width="0.7" />
<ellipse cx="907.8" cy="568.4" rx="3.6" ry="1.0" fill="#111" stroke="#111" stroke-width="0.8"/>
<ellipse cx="929.3" cy="576.7" rx="3.4" ry="1.0" fill="#111" stroke="#111" stroke-width="0.8"/>
<ellipse cx="938" cy="579.3" rx="6.4" ry="1.7" fill="#55554c" stroke="#111" stroke-width="0.8"/>
<ellipse cx="956.5" cy="586.8" rx="6.4" ry="1.7" fill="#55554c" stroke="#111" stroke-width="0.8"/>
<ellipse cx="966.5" cy="592" rx="3.2" ry="1.0" fill="#111" stroke="#111" stroke-width="0.8"/>
<polygon points="815.3,548.1 832.0,555.0 891.6,547.3 891.6,552.7 832.8,561.0 815.3,554.2" fill="#007676" stroke="#080808" stroke-width="1.0" stroke-linejoin="round" />
<polygon points="815.3,548.1 876.0,540.0 891.6,547.3 832.0,555.0" fill="#0a8a8a" stroke="#080808" stroke-width="1.0" stroke-linejoin="round" />
<polyline points="832.0,555.0 832.8,561.0" fill="none" stroke="#111" stroke-width="0.6" />
<polygon points="820.6,532.0 832.8,537.4 832.8,552.7 821.4,547.3" fill="#0b6fb4" stroke="#080808" stroke-width="1.0" stroke-linejoin="round" />
<polygon points="832.8,537.4 876.3,530.5 876.3,545.8 832.8,552.7" fill="#0a5f9e" stroke="#080808" stroke-width="1.0" stroke-linejoin="round" />
<polygon points="820.6,532.0 861.0,526.0 876.3,530.5 832.8,537.4" fill="#084a7c" stroke="#080808" stroke-width="1.0" stroke-linejoin="round" />
<ellipse cx="834.4" cy="529.6" rx="3.6" ry="2" fill="#111"/><ellipse cx="834.4" cy="528.6" rx="3" ry="1.8" fill="#3fe040"/>
<ellipse cx="857.7" cy="526.8" rx="3.6" ry="2" fill="#111"/><ellipse cx="857.7" cy="525.8" rx="3" ry="1.8" fill="#3fe040"/>
<ellipse cx="864.1" cy="540" rx="6.4" ry="6.9" fill="#084a7c" stroke="#111" stroke-width="0.9"/><ellipse cx="864.6" cy="540" rx="4.3" ry="4.8" fill="#0a5a96" stroke="#111" stroke-width="0.7"/><ellipse cx="865" cy="540" rx="2.2" ry="2.6" fill="#063a62" stroke="#111" stroke-width="0.5"/>
<path d="M879.5 543v3.2a3.6 1.4 0 0 0 7.2 0v-3.2Z" fill="#c9b1b1" stroke="#111" stroke-width="0.5"/><ellipse cx="883.1" cy="543" rx="3.6" ry="1.4" fill="#2a2a2a"/>
<ellipse cx="874.5" cy="602" rx="3.6" ry="5.6" fill="none" stroke="#d87a10" stroke-width="2.2"/><ellipse cx="874.5" cy="602" rx="4.7" ry="6.7" fill="none" stroke="#111" stroke-width="0.5"/>
<path d="M804.3 585.8L805.8 581.2L816.5 576.6L827.2 574.4L855.4 575.9L863.8 576.6L869.2 584.3L869.9 601.1L867.6 608.7L863.8 609.5L860.8 601.1L859.2 593.4L856 590L856 656L857.7 651.5L866.9 650.7L869.9 656L869.2 677.4L865.3 686.6L857.7 690.4L845.5 691.9L828.7 692.7L819.5 690.4L810.4 682L805 669.8L803.5 646.9Z" fill="#e8e400" stroke="#111" stroke-width="0.8"/>
<path d="M828 572.8L831.8 569L842.4 566.7L851.6 567.5L854.7 572.8L853.1 578.2L828.7 580.5Z" fill="#a8a200" stroke="#111" stroke-width="0.7"/>
<path d="M812 582L828.7 580.5L853.1 578.2L856 590L852 593L818 596L812 592Z" fill="#c8c200" stroke="#111" stroke-width="0.6"/>
<path d="M819.5 690.4L822 684L846 681L862 684L857.7 690.4L845.5 691.9L828.7 692.7Z" fill="#a8a200" stroke="#111" stroke-width="0.7"/>
<path d="M804.5 590l4 1l3 12l3 -3l3 9M804.5 668l5 -8l3 4l3 -6M858 592l4 12l4 -3M858 655l4 8l4 -10" fill="none" stroke="#111" stroke-width="0.8"/>
<circle cx="839.5" cy="584.5" r="3.2" fill="#1a9aa8" stroke="#043a40" stroke-width="0.8"/><circle cx="839.5" cy="584.5" r="1.4" fill="#0a5a66"/>
<rect x="817.5" y="593" width="38.5" height="76" rx="6" fill="#0d2f66" stroke="#111" stroke-width="0.8" transform="skewY(-8)" transform-origin="836 631"/>
<rect x="821.5" y="597.5" width="31" height="67" rx="5" fill="#a8a200" stroke="#111" stroke-width="0.7" transform="skewY(-8)" transform-origin="836 631"/>
<rect x="825" y="601" width="24" height="60" rx="7" fill="none" stroke="#1f5a24" stroke-width="6" transform="skewY(-8)" transform-origin="836 631"/>
<rect x="825" y="601" width="24" height="60" rx="7" fill="none" stroke="#3f9a44" stroke-width="3.8" stroke-dasharray="8 2.4" transform="skewY(-8)" transform-origin="836 631"/>
<rect x="829" y="605" width="15.5" height="52" rx="6" fill="#b5ae00" stroke="#111" stroke-width="0.7" transform="skewY(-8)" transform-origin="836 631"/>
<path d="M829.8 689.5L857 686.5L859 693L853 700.5L835 702.5L829.8 697.5Z" fill="#a8a200" stroke="#111" stroke-width="0.7"/>
<path d="M819 686.5L829.8 689.5L857 686.5L866 683" fill="none" stroke="#111" stroke-width="0.7"/>
<polygon points="820.5,675.0 839.4,672.8 839.4,688.4 820.5,690.4" fill="#a0a0a0" stroke="#080808" stroke-width="0.6" stroke-linejoin="round" />
<polygon points="974.7,609.3 991.5,615.4 1029.0,609.6 1029.0,617.0 993.7,622.0 974.7,614.4" fill="#007676" stroke="#080808" stroke-width="1.0" stroke-linejoin="round" />
<polygon points="974.7,609.3 1012.0,604.0 1029.0,609.6 991.5,615.4" fill="#0a8a8a" stroke="#080808" stroke-width="1.0" stroke-linejoin="round" />
<polygon points="978.7,591.6 1039.4,583.0 1066.9,591.2 1053.9,594.3 1047.8,592.7 1033.3,588.2 1018.8,589.7 1018.8,591.2 988.2,595.8" fill="#07558a" stroke="#080808" stroke-width="1.0" stroke-linejoin="round" />
<polygon points="978.7,591.6 988.2,595.8 988.2,610.3 978.7,606.1" fill="#0b6fb4" stroke="#080808" stroke-width="1.0" stroke-linejoin="round" />
<polygon points="988.2,595.8 1018.8,591.2 1018.8,608.8 988.2,610.3" fill="#0a5f9e" stroke="#080808" stroke-width="1.0" stroke-linejoin="round" />
<polygon points="1003.9,593.6 1006.2,593.2 1006.2,609.5 1003.9,609.7" fill="#1a8ede" stroke="#080808" stroke-width="0.4" stroke-linejoin="round" />
<polygon points="1018.8,589.7 1033.3,588.2 1033.3,596.6 1026.4,597.5 1026.4,606.9 1018.8,607.6" fill="#095a96" stroke="#080808" stroke-width="1.0" stroke-linejoin="round" />
<polygon points="1033.3,588.2 1047.8,592.7 1053.9,594.3 1053.9,596.2 1033.3,596.7" fill="#0b6fb4" stroke="#080808" stroke-width="1.0" stroke-linejoin="round" />
<polyline points="997.0,591.8 1003.0,586.5 1010.0,588.2" fill="none" stroke="#111" stroke-width="0.6" />
<polyline points="1025.0,589.0 1030.0,584.6 1040.0,586.4" fill="none" stroke="#111" stroke-width="0.6" />
<ellipse cx="994" cy="602.7" rx="4" ry="4.4" fill="#0a5f9e" stroke="#111" stroke-width="0.9"/><path d="M994 598.9000000000001v7.6" stroke="#111" stroke-width="1.1"/><path d="M992.4 599.5a4 4.4 0 0 0 0 6.4" fill="none" stroke="#111" stroke-width="0.7"/>
<ellipse cx="1013.4" cy="601.1" rx="4" ry="4.4" fill="#0a5f9e" stroke="#111" stroke-width="0.9"/><path d="M1013.4 597.3000000000001v7.6" stroke="#111" stroke-width="1.1"/><path d="M1011.8 597.9a4 4.4 0 0 0 0 6.4" fill="none" stroke="#111" stroke-width="0.7"/>
<path d="M992.8 590.6v1.6a3.5 1.4 0 0 0 7 0v-1.6Z" fill="#1a9a1a"/><ellipse cx="996.3" cy="590.4" rx="3.5" ry="1.5" fill="#3fe83f"/>
<path d="M1015.9 587.5v1.6a3.5 1.4 0 0 0 7 0v-1.6Z" fill="#1a9a1a"/><ellipse cx="1019.4" cy="587.3" rx="3.5" ry="1.5" fill="#3fe83f"/>
<path d="M1050.2 584.6v3.2a3.7 1.5 0 0 0 7.4 0v-3.2Z" fill="#c9b1b1" stroke="#111" stroke-width="0.5"/><ellipse cx="1053.9" cy="584.6" rx="3.7" ry="1.5" fill="#1c1c1c"/>
<polygon points="1065.0,589.6 1072.0,588.8 1076.0,590.6 1069.0,591.6" fill="#b9b0d8" stroke="#080808" stroke-width="0.4" stroke-linejoin="round" />
<polygon points="1027.1,599.4 1135.4,586.9 1147.9,589.0 1039.6,602.5" fill="#68652f" stroke="#080808" stroke-width="1.0" stroke-linejoin="round" />
<polygon points="1027.1,599.4 1039.6,602.5 1041.7,682.7 1029.2,675.4" fill="#77733c" stroke="#080808" stroke-width="1.0" stroke-linejoin="round" />
<polygon points="1039.6,602.5 1147.9,589.0 1149.0,666.0 1041.7,682.7" fill="#56532a" stroke="#080808" stroke-width="1.0" stroke-linejoin="round" />
<circle cx="1050" cy="633.8" r="5.8" fill="#4a4a40" stroke="#111" stroke-width="1"/><circle cx="1050" cy="633.8" r="3.6" fill="#77776c" stroke="#111" stroke-width="0.7"/><path d="M1048.6 631.5v4.6h3" fill="none" stroke="#111" stroke-width="0.6"/>
<circle cx="1050.8" cy="670" r="3.2" fill="#3a3820" stroke="#111" stroke-width="0.7"/><circle cx="1050.8" cy="670" r="1.3" fill="#fff8c0"/>
<polygon points="1062.0,608.2 1067.5,602.4 1078.2,607.4 1077.4,675.4 1064.4,670.8 1062.6,667.7" fill="#2f9636" stroke="#080808" stroke-width="1.0" stroke-linejoin="round" />
<polygon points="1067.5,602.4 1116.3,595.2 1125.5,595.2 1140.0,602.8 1078.2,607.4" fill="#2a7f30" stroke="#080808" stroke-width="1.0" stroke-linejoin="round" />
<path d="M1078.2 607.4L1125.5 597.5Q1138 596 1140 602.8L1141 664L1077.4 675.4Z" fill="#1f5a24" stroke="#111" stroke-width="0.8"/>
<defs><linearGradient id="grod1" gradientUnits="userSpaceOnUse" x1="1207.0" y1="632.6" x2="1203.8" y2="641.4"><stop offset="0" stop-color="#c2c1b0"/><stop offset="0.4" stop-color="#aaa998"/><stop offset="1" stop-color="#66655a"/></linearGradient></defs>
<polygon points="1129.4,605.1 1284.6,660.1 1281.4,668.9 1126.2,613.9" fill="url(#grod1)"/>
<ellipse cx="1127.8" cy="609.5" rx="2.6" ry="4.7" fill="#b2b1a0" transform="rotate(-8 1127.8 609.5)"/>
<path d="M1113.3 610.5L1252 657.3L1226.7 662.5L1226 713.5L1092.7 665.4A27 31.5 -8 0 1 1113.3 610.5Z" fill="url(#gbody)" stroke="#111" stroke-width="0.7"/>
<defs><linearGradient id="grod2" gradientUnits="userSpaceOnUse" x1="1155.9" y1="637.9" x2="1152.8" y2="646.3"><stop offset="0" stop-color="#c2c1b0"/><stop offset="0.4" stop-color="#aaa998"/><stop offset="1" stop-color="#66655a"/></linearGradient></defs>
<polygon points="1084.3,611.6 1227.6,664.2 1224.4,672.6 1081.1,620.0" fill="url(#grod2)"/>
<ellipse cx="1082.7" cy="615.8" rx="2.5" ry="4.5" fill="#b2b1a0" transform="rotate(-8 1082.7 615.8)"/>
<defs><linearGradient id="grod3" gradientUnits="userSpaceOnUse" x1="1156.3" y1="688.4" x2="1153.2" y2="696.9"><stop offset="0" stop-color="#c2c1b0"/><stop offset="0.4" stop-color="#aaa998"/><stop offset="1" stop-color="#66655a"/></linearGradient></defs>
<polygon points="1085.0,662.8 1227.5,714.1 1224.5,722.5 1082.0,671.2" fill="url(#grod3)"/>
<ellipse cx="1083.5" cy="667.0" rx="2.5" ry="4.5" fill="#b2b1a0" transform="rotate(-8 1083.5 667.0)"/>
<polygon points="1224.1,667.4 1226.7,662.5 1281.5,654.5 1293.5,659.4 1244.1,666.1 1239.4,671.4" fill="#2a7f30" stroke="#080808" stroke-width="1.0" stroke-linejoin="round" />
<polygon points="1224.1,667.4 1239.4,671.4 1240.1,733.5 1224.7,727.5" fill="#2d8232" stroke="#080808" stroke-width="1.0" stroke-linejoin="round" />
<polygon points="1239.4,671.4 1244.1,666.1 1293.5,659.4 1302.2,666.1 1303.5,726.8 1297.5,732.2 1246.8,738.2 1240.1,733.5" fill="#215a22" stroke="#080808" stroke-width="1.0" stroke-linejoin="round" />
<polygon points="1260.1,681.3 1253.2,687.2 1244.2,684.6 1242.1,676.3 1249.0,670.4 1258.0,673.0" fill="#85857a" stroke="#111" stroke-width="0.8"/><ellipse cx="1251.1" cy="678.8" rx="6" ry="6.6" fill="#97978a" stroke="#111" stroke-width="0.6"/><ellipse cx="1254.6999999999998" cy="679.4" rx="4.6" ry="5" fill="#707065" stroke="#111" stroke-width="0.7"/>
<polygon points="1304.9,675.3 1298.0,681.2 1289.0,678.6 1286.9,670.3 1293.8,664.4 1302.8,667.0" fill="#85857a" stroke="#111" stroke-width="0.8"/><ellipse cx="1295.9" cy="672.8" rx="6" ry="6.6" fill="#97978a" stroke="#111" stroke-width="0.6"/><ellipse cx="1299.5" cy="673.4" rx="4.6" ry="5" fill="#707065" stroke="#111" stroke-width="0.7"/>
<polygon points="1260.8,730.7 1253.9,736.6 1244.9,734.0 1242.8,725.7 1249.7,719.8 1258.7,722.4" fill="#85857a" stroke="#111" stroke-width="0.8"/><ellipse cx="1251.8" cy="728.2" rx="6" ry="6.6" fill="#97978a" stroke="#111" stroke-width="0.6"/><ellipse cx="1255.3999999999999" cy="728.8000000000001" rx="4.6" ry="5" fill="#707065" stroke="#111" stroke-width="0.7"/>
<polygon points="1305.5,724.7 1298.6,730.6 1289.6,728.0 1287.5,719.7 1294.4,713.8 1303.4,716.4" fill="#85857a" stroke="#111" stroke-width="0.8"/><ellipse cx="1296.5" cy="722.2" rx="6" ry="6.6" fill="#97978a" stroke="#111" stroke-width="0.6"/><ellipse cx="1300.1" cy="722.8000000000001" rx="4.6" ry="5" fill="#707065" stroke="#111" stroke-width="0.7"/>
<g opacity="0.92"><path d="M892.5 537V518M897 537.6V513M901.5 538V509.5M933.5 537V518M929 537.6V513M924.5 538V509.5" stroke="url(#gwm)" stroke-width="1.7" fill="none"/><path d="M890.5 539.2h15q5 0 7.5 -2.6q2.5 2.6 7.5 2.6h15" stroke="url(#gwm)" stroke-width="1.5" fill="none"/><path d="M915 508.5q-10 5 -9 15q1 8 7 11.5q7 -3 9 -10q1 -7 -4 -10.5q1 7 -3 10l-1 -15q-1 -1.5 1 -1z" fill="url(#gwm)"/><text x="947" y="532" font-size="17.5" font-weight="bold" fill="#f08a2a" font-family="Liberation Sans,Noto Sans CJK SC,sans-serif" textLength="83" lengthAdjust="spacingAndGlyphs">智造资料网</text><text x="947" y="538.6" font-size="4.6" font-weight="bold" fill="#f08a2a" font-family="Liberation Sans,sans-serif" textLength="83" lengthAdjust="spacingAndGlyphs">INTELLIGENT MANUFACTURING DATA</text></g>
</svg>

<svg class="abs" style="left:60px;top:840px" width="120" height="130" viewBox="60 840 120 130">
<polygon points="97,919.4 112.1,917.2 119.6,916.9 132,921.3 132,943 97,943" fill="#ffffff" fill-opacity="0.17" stroke="#d4d4d4" stroke-width="0.7"/>
<polygon points="99.7,945.2 108.4,949.2 113.3,949.2 129.5,946 119.6,941.5" fill="#8a9a5a" fill-opacity="0.8" stroke="#f4e800" stroke-width="0.8"/>
<path d="M119 941V876" stroke="#10d4dc" stroke-width="2.6"/><path d="M119.6 941V876" stroke="#0a8a90" stroke-width="0.8"/>
<path d="M118.4 868L122.6 878.4Q118.5 880.4 114.4 878.4Z" fill="#19e6ee"/>
<path d="M119.6 941.3L98 944.6" stroke="#e00000" stroke-width="2.6"/><path d="M89 945.6L98.6 941.2Q100.4 945 98.8 948.8Z" fill="#f00000"/>
<path d="M119.6 941.3L137.5 948" stroke="#10d810" stroke-width="2.4"/><ellipse cx="139.8" cy="948.6" rx="4.4" ry="3.6" fill="#10d810"/>
<circle cx="119.6" cy="941.2" r="2.8" fill="#8a8a86"/><circle cx="118.9" cy="940.4" r="1.2" fill="#b8b8b4"/>
<text x="113.6" y="865.6" font-size="11.5" fill="#dcdcdc" font-family="Liberation Sans,sans-serif">Z</text>
<text x="77.8" y="950.8" font-size="11.5" fill="#dcdcdc" font-family="Liberation Sans,sans-serif">X</text>
<text x="142.6" y="956.6" font-size="11.5" fill="#dcdcdc" font-family="Liberation Sans,sans-serif">Y</text>
</svg>

<!-- ===== status bars ===== -->
<div id="status1" class="abs"></div>
<div id="status2" class="abs"></div>
<div class="abs" style="left:0;top:1019px;width:1920px;height:1px;background:#a6abb8"></div>
<div class="abs" style="left:0;top:1020px;width:1920px;height:1px;background:#f2f4f9"></div>
<!-- row 1 -->
<div class="abs" style="left:1336px;top:1004px;width:3px;height:14px;background-image:repeating-linear-gradient(#aab0c0 0 1px,transparent 1px 2px)"></div>
<div class="abs" style="left:1341px;top:1003px;width:131px;height:16px;background:#fff"></div>
<svg class="abs" style="left:1458px;top:1003px" width="15" height="16" viewBox="0 0 15 16"><circle cx="8.6" cy="6" r="3.8" fill="#e6f0fc" stroke="#3a6ab8" stroke-width="1.3"/><path d="M5.8 9L2 13.4" stroke="#3a6ab8" stroke-width="1.8" stroke-linecap="round"/></svg>
<div class="abs" style="left:1476px;top:1004px;width:3px;height:14px;background-image:repeating-linear-gradient(#aab0c0 0 1px,transparent 1px 2px)"></div>
<div class="st" style="left:1486px;top:1005px;letter-spacing:0.1px">绝对 XY 上视图</div>
<div class="vsep" style="left:1592px;top:1003px;height:15px"></div>
<div class="st" style="left:1601px;top:1005px">绝对视图</div>
<div class="abs" style="left:1657px;top:1004px;width:3px;height:14px;background-image:repeating-linear-gradient(#aab0c0 0 1px,transparent 1px 2px)"></div>
<div class="st" style="left:1668px;top:1005px;font-weight:bold;letter-spacing:0px">LAYER0</div>
<div class="vsep" style="left:1726px;top:1003px;height:15px"></div>
<div class="vsep" style="left:1757px;top:1003px;height:15px"></div>
<div class="abs" style="left:1762px;top:1005px;width:32px;height:12px;background:#3f5c8c"></div>
<div class="vsep" style="left:1800px;top:1003px;height:15px"></div>
<div class="abs" style="left:1805px;top:1005px;width:32px;height:12px;background:#3f5c8c"></div>
<div class="vsep" style="left:1843px;top:1003px;height:15px"></div>
<div class="abs" style="left:1848px;top:1005px;width:32px;height:12px;background:#3f5c8c"></div>
<div class="vsep" style="left:1886px;top:1003px;height:15px"></div>
<svg class="abs" style="left:1892px;top:1002px" width="17" height="17" viewBox="0 0 17 17"><circle cx="8.5" cy="8.5" r="7.6" fill="#1a3ab8" stroke="#0a1a5a" stroke-width="0.8"/><path d="M4 4.5Q7 2 9.5 3.5Q11 5.5 8.5 7.5Q6.5 9.5 7.5 12.5Q5 13 3.5 10Q2 7 4 4.5Z" fill="#2fb52f"/><path d="M11 8.5Q13.5 8 14.5 10.5Q13.5 13.5 11 13.5Q10 11 11 8.5Z" fill="#2fb52f"/><circle cx="6" cy="5" r="2" fill="#fff" opacity="0.35"/></svg>
<!-- row 2 -->
<div class="vsep" style="left:1132px;top:1024px;height:15px"></div>
<div class="st" style="left:1141px;top:1025px">拴牢</div>
<div class="vsep" style="left:1175px;top:1024px;height:15px"></div>
<svg class="abs" style="left:1181px;top:1022px" width="18" height="18" viewBox="0 0 18 18"><rect x="0.7" y="0.7" width="16.6" height="16.6" fill="#c8ccda" stroke="#5a6074" stroke-width="1.2"/><path d="M4 8Q4.6 3.6 9.4 4L9 2.4L13.4 5L9.6 7.6L9.5 6Q6.4 5.8 6 8ZM14 10Q13.4 14.4 8.6 14L9 15.6L4.6 13L8.4 10.4L8.5 12Q11.6 12.2 12 10Z" fill="#e86a78" stroke="#b83a4a" stroke-width="0.5"/></svg>
<div class="vsep" style="left:1206px;top:1024px;height:15px"></div>
<div class="abs" style="left:1212px;top:1022px;width:18px;height:18px;background:#ffe27c"></div>
<svg class="abs" style="left:1212px;top:1022px" width="18" height="18" viewBox="0 0 18 18"><path d="M2 4L9 1.5L13 4L6 7Z" fill="#e84ad8"/><path d="M2 4L6 7V11L2 8Z" fill="#e8a020"/><path d="M8 6.5L15.5 13L12.4 13.4L14 17L12.4 17.6L10.8 14.2L8.6 16Z" fill="#e8e4d0" stroke="#555" stroke-width="0.7"/><path d="M5 1l1 2M9 0.5v2M2 2l2 1.5" stroke="#e84ad8" stroke-width="0.8"/></svg>
<div class="vsep" style="left:1237px;top:1024px;height:15px"></div>
<svg class="abs" style="left:1243px;top:1022px" width="19" height="18" viewBox="0 0 19 18"><path d="M3 8L9.5 3L16 8V16H3Z" fill="#e4e8f2" stroke="#5a6a8a" stroke-width="0.8"/><path d="M1.5 8.5L9.5 2L17.5 8.5" fill="none" stroke="#3a68c8" stroke-width="1.5"/><rect x="5" y="10" width="3.4" height="3.4" fill="#3a78d8"/><rect x="9.6" y="12" width="3.4" height="4" fill="#3a78d8"/><path d="M8 5.5L13 2.5L17.5 3.5L18 6L13 7.5L11 9Z" fill="#e8b880" stroke="#8a5a2a" stroke-width="0.6"/></svg>
<div class="vsep" style="left:1268px;top:1024px;height:15px"></div>
<svg class="abs" style="left:1274px;top:1021px" width="20" height="20" viewBox="0 0 20 20"><ellipse cx="9.5" cy="18" rx="6" ry="1.4" fill="#000" opacity="0.22"/><text x="9.5" y="15.5" font-size="19" font-weight="bold" fill="#4a7ed0" stroke="#2a58a8" stroke-width="0.5" text-anchor="middle" font-family="Liberation Sans,sans-serif">?</text></svg>
<div class="vsep" style="left:1299px;top:1024px;height:15px"></div>
<svg class="abs" style="left:1304px;top:1022px" width="20" height="18" viewBox="0 0 20 18"><path d="M4 3.5L8 1.5L12 3.5V8L8 10L4 8Z" fill="#4a8ae8" stroke="#1a3a8a" stroke-width="0.7"/><path d="M4 3.5L8 5.5L12 3.5M8 5.5V10" stroke="#1a3a8a" stroke-width="0.6" fill="none"/><path d="M10 9.5L14.5 7.5L19 9.5V14.5L14.5 16.5L10 14.5Z" fill="#6aa0b8" stroke="#1a2a3a" stroke-width="0.7"/><path d="M10 9.5L14.5 11.5L19 9.5M14.5 11.5V16.5" stroke="#1a2a3a" stroke-width="0.6" fill="none"/><path d="M1 12.5H9M6 9.5L9.4 12.5L6 15.5" stroke="#e81010" stroke-width="1.6" fill="none"/></svg>
<div class="vsep" style="left:1331px;top:1024px;height:15px"></div>
<div class="abs" style="left:1336px;top:1022px;width:19px;height:18px;background:#ffe27c"></div>
<svg class="abs" style="left:1336px;top:1022px" width="19" height="18" viewBox="0 0 19 18"><path d="M2 5L9.5 2L17 5L9.5 8Z" fill="#e040e8" stroke="#333" stroke-width="0.6"/><path d="M2 5V13L9.5 16.5V8Z" fill="#5ab0e0" stroke="#333" stroke-width="0.6"/><path d="M17 5V13L9.5 16.5V8Z" fill="#9ac0a8" stroke="#333" stroke-width="0.6"/></svg>
<div class="vsep" style="left:1361px;top:1024px;height:15px"></div>
<svg class="abs" style="left:1429px;top:1023px" width="18" height="17" viewBox="0 0 18 17"><rect x="1" y="1" width="16" height="15" fill="#eef1f8" stroke="#4a5a7a" stroke-width="1.2"/><path d="M9 1V16M1 8.5H17" stroke="#4a5a7a" stroke-width="1.2"/></svg>
<div class="vsep" style="left:1455px;top:1024px;height:15px"></div>
<div class="st" style="left:1463px;top:1025px;letter-spacing:-0.03px">LS: 1.00 PS: 1.00</div>
<div class="vsep" style="left:1580px;top:1024px;height:15px"></div>
<div class="st" style="left:1589px;top:1025px">单位: 毫米</div>
<div class="vsep" style="left:1654px;top:1024px;height:15px"></div>
<div class="st" style="left:1663px;top:1025px;color:#e81818;letter-spacing:0.4px">X =-0276.101</div>
<div class="st" style="left:1745px;top:1025px;letter-spacing:0.43px">Y = 0135.625 Z = 0000.000</div>

<div id="taskbar" class="abs"></div>
<div class="abs" style="left:48px;top:1040px;width:343px;height:8px;background:#f2f2f2"></div>
<div class="abs" style="left:589px;top:1040px;width:47px;height:8px;background:#4b4b4b"></div>
<svg class="abs" style="left:1350px;top:955px" width="120" height="90" viewBox="1350 955 120 90">
<rect x="1371.5" y="1030" width="9" height="8" fill="none" stroke="#3a7a4a" stroke-width="1.2"/>
<circle cx="1367.3" cy="1005.4" r="8.3" fill="#8b5e52"/>
<text x="1367.3" y="1010.2" font-size="13.5" fill="#fff" text-anchor="middle" font-family="Liberation Sans,sans-serif">A</text>
<circle cx="1374.6" cy="1026.2" r="8.3" fill="#8b5e52"/>
<path d="M1368.6 1022.6l3.4-1.8q2.6 1.8 5.2 0l3.4 1.8-1.6 3-1.4-0.7v6.6h-6v-6.6l-1.4 0.7z" fill="#fff"/>
<ellipse cx="1405.5" cy="1038" rx="14.5" ry="2.2" fill="#b8743a" opacity="0.8"/>
<!-- antenna -->
<path d="M1404 973q-1-5-4-6M1408.6 973q0-3 1-5" stroke="#a05a1a" stroke-width="2.2" fill="none" stroke-linecap="round"/>
<ellipse cx="1399.6" cy="966.6" rx="2.4" ry="1.8" fill="#a05a1a"/><ellipse cx="1409.4" cy="968" rx="1.4" ry="2" fill="#a05a1a"/>
<!-- hood -->
<circle cx="1388.6" cy="977.6" r="5.4" fill="#c08a4a" stroke="#a05a1a" stroke-width="1"/><circle cx="1422.8" cy="977.6" r="5.4" fill="#c08a4a" stroke="#a05a1a" stroke-width="1"/>
<circle cx="1388.8" cy="978.2" r="2.6" fill="#f0b090"/><circle cx="1422.6" cy="978.2" r="2.6" fill="#f0b090"/>
<path d="M1380 1002Q1379 974 1406 972.6Q1433 974 1433.4 1002Q1432 1020 1406.5 1021.5Q1381 1020 1380 1002Z" fill="#c08a4a" stroke="#a05a1a" stroke-width="1"/>
<!-- body -->
<path d="M1392 1018q-6 1-5 6q4 2 7-1zM1421 1018q6 1 5 6q-4 2-7-1z" fill="#fff45a" stroke="#e0b020" stroke-width="0.7"/>
<path d="M1393 1018Q1392 1034 1399 1036L1400 1038h4l0.5-2h4l0.5 2h4l1-2Q1421 1034 1420 1018Z" fill="#fff45a" stroke="#e0b020" stroke-width="0.7"/>
<path d="M1394 1018.5q12 5 25 0" stroke="#a05a1a" stroke-width="2.4" fill="none"/>
<path d="M1417 1021q-5 6-12 11" stroke="#a05a1a" stroke-width="1.6" fill="none"/>
<!-- face -->
<ellipse cx="1406.9" cy="1000" rx="21.5" ry="17.4" fill="#fff45a" stroke="#e8a020" stroke-width="0.8"/>
<circle cx="1395.7" cy="993.5" r="1.6" fill="#6a3a10"/><circle cx="1416.7" cy="993.5" r="1.6" fill="#6a3a10"/>
<ellipse cx="1406.4" cy="997.8" rx="1.5" ry="0.9" fill="#8a4a1a"/>
<ellipse cx="1391.2" cy="1000.2" rx="3.6" ry="2.8" fill="#ffa030" opacity="0.85"/><ellipse cx="1421.4" cy="1000.2" rx="3.6" ry="2.8" fill="#ffa030" opacity="0.85"/>
<!-- small bear bag -->
<circle cx="1390.6" cy="1023" r="2.6" fill="#c08a4a" stroke="#a05a1a" stroke-width="0.7"/><circle cx="1401.6" cy="1023" r="2.6" fill="#c08a4a" stroke="#a05a1a" stroke-width="0.7"/>
<ellipse cx="1396.1" cy="1029" rx="8" ry="7.2" fill="#c08a4a" stroke="#a05a1a" stroke-width="0.8"/>
<circle cx="1393.2" cy="1027.6" r="0.8" fill="#4a2a10"/><circle cx="1399" cy="1027.6" r="0.8" fill="#4a2a10"/>
<ellipse cx="1391.8" cy="1030.4" rx="1.6" ry="1.1" fill="#ff8ac0"/><ellipse cx="1400.4" cy="1030.4" rx="1.6" ry="1.1" fill="#ff8ac0"/>
<!-- WOW letters -->
<g font-family="Liberation Sans,sans-serif" font-weight="bold" text-anchor="middle">
<text x="1446" y="990.5" font-size="24" fill="#b8703a" stroke="#b8703a" stroke-width="4.6" stroke-linejoin="round" transform="rotate(8 1446 982)" textLength="20" lengthAdjust="spacingAndGlyphs">W</text><text x="1446" y="990.5" font-size="24" fill="#fff8ee" stroke="#fff8ee" stroke-width="2.4" stroke-linejoin="round" transform="rotate(8 1446 982)" textLength="20" lengthAdjust="spacingAndGlyphs">W</text>
<circle cx="1440" cy="982" r="1.1" fill="#c8905a"/><circle cx="1446" cy="977" r="1.1" fill="#c8905a"/><circle cx="1451.5" cy="984" r="1.1" fill="#c8905a"/><circle cx="1442" cy="988" r="1" fill="#c8905a"/><circle cx="1449" cy="989.5" r="1" fill="#c8905a"/>
<circle cx="1439.2" cy="993.6" r="3.6" fill="#c8956a" stroke="#a05a1a" stroke-width="0.7"/><circle cx="1453.8" cy="993.8" r="3.6" fill="#c8956a" stroke="#a05a1a" stroke-width="0.7"/>
<circle cx="1439.4" cy="993.8" r="1.6" fill="#f0b8a0"/><circle cx="1453.6" cy="994" r="1.6" fill="#f0b8a0"/>
<ellipse cx="1446.4" cy="1003" rx="10.4" ry="10.6" fill="#c8956a" stroke="#a05a1a" stroke-width="0.8"/>
<text x="1446" y="1007.5" font-size="13" fill="#fff" stroke="#fff" stroke-width="1.6">O</text>
<text x="1446.8" y="1032" font-size="26" fill="#c89030" stroke="#c89030" stroke-width="4.8" stroke-linejoin="round" transform="rotate(-6 1447 1024)" textLength="20" lengthAdjust="spacingAndGlyphs">W</text><text x="1446.8" y="1032" font-size="26" fill="#ffee50" stroke="#ffee50" stroke-width="2.8" stroke-linejoin="round" transform="rotate(-6 1447 1024)" textLength="20" lengthAdjust="spacingAndGlyphs">W</text>
</g>
</svg>
<div class="abs" style="left:1814px;top:1040px;width:40px;height:8px;overflow:hidden"><div style="position:absolute;left:0;top:3px;color:#fff;font-size:12px;line-height:14px;letter-spacing:0.3px">10:40</div></div>

</body>
</html>
